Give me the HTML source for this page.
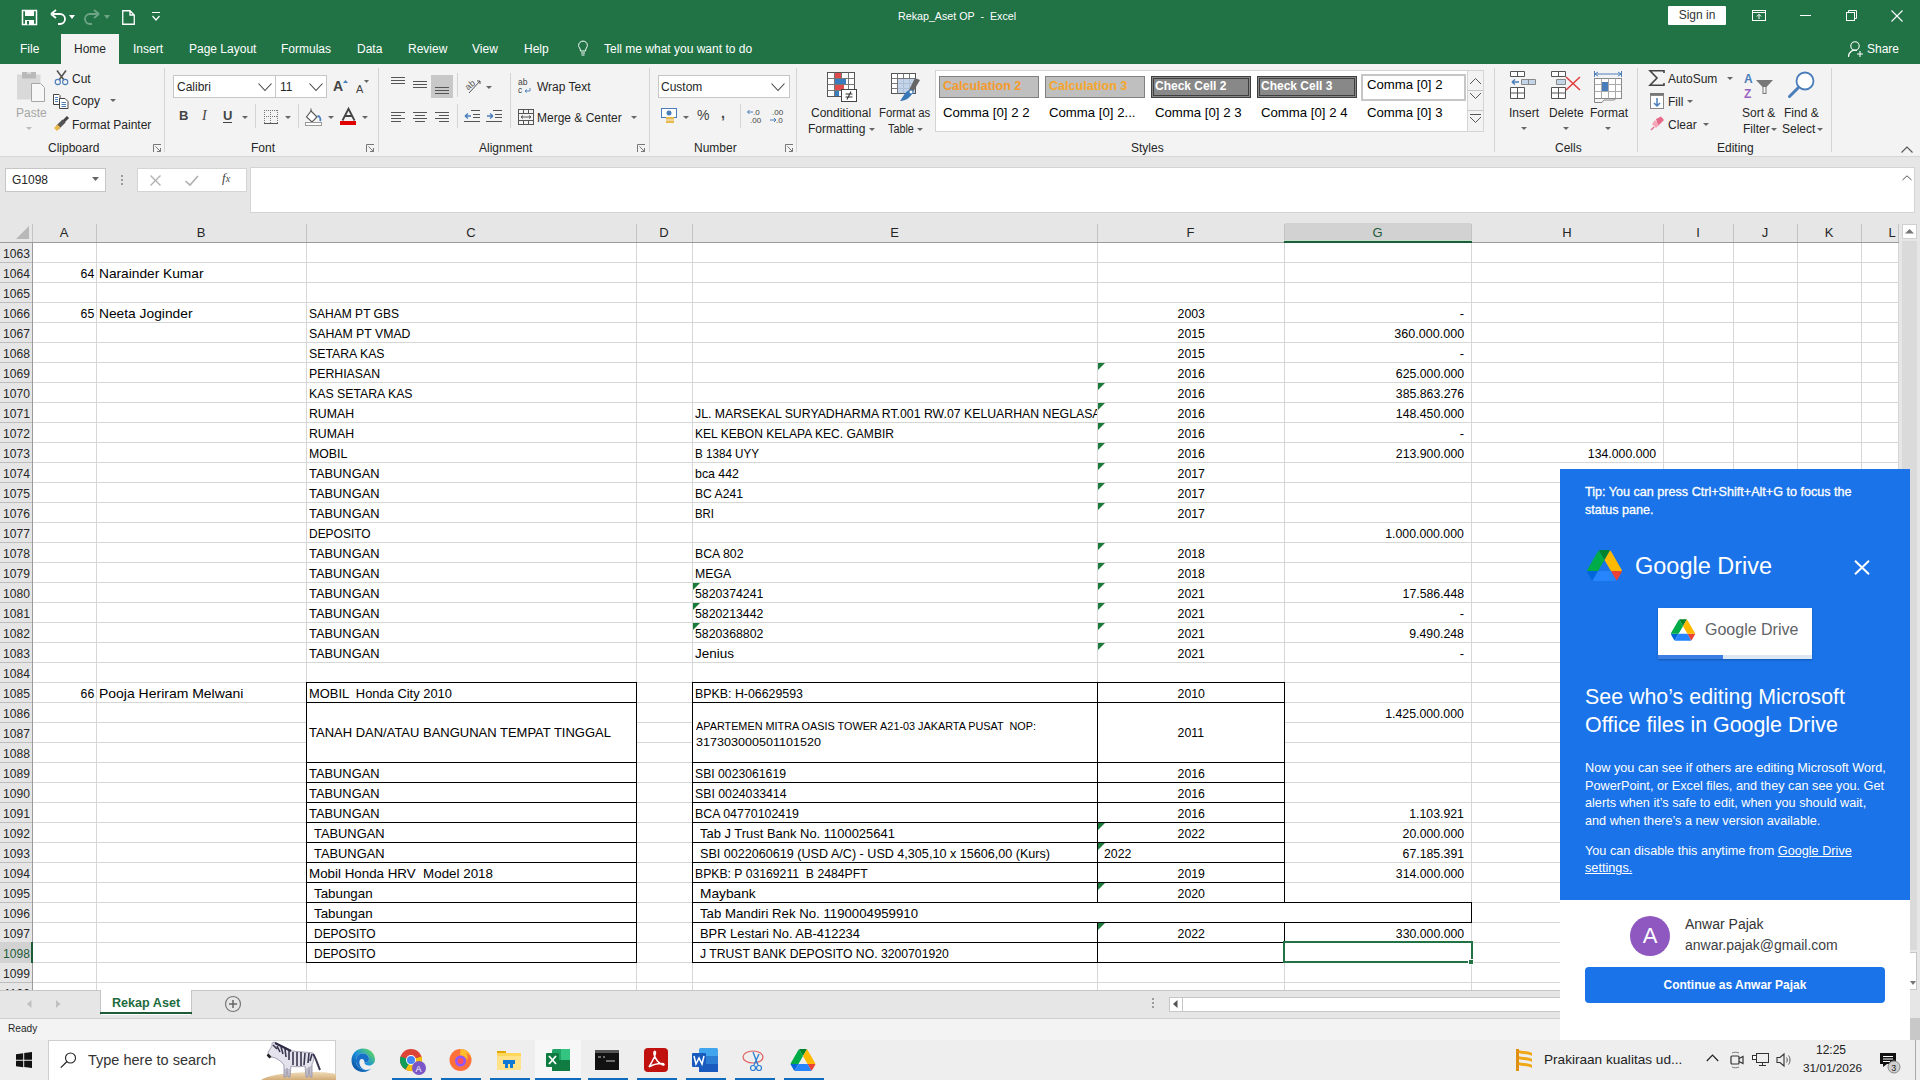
<!DOCTYPE html>
<html><head><meta charset="utf-8"><title>Rekap_Aset OP - Excel</title>
<style>
html,body{margin:0;padding:0;}
body{width:1920px;height:1080px;overflow:hidden;position:relative;font-family:"Liberation Sans", sans-serif;background:#fff;}
div{box-sizing:border-box;}
svg{position:absolute;overflow:visible;}
</style></head><body>

<div style="position:absolute;left:0px;top:0px;width:1920px;height:64px;background:#217346;"></div>
<div style="position:absolute;left:61px;top:34px;width:58px;height:30px;background:#f3f3f3;"></div>
<!-- quick access -->
<svg style="left:22px;top:10px" width="15" height="15"><path d="M0.5 0.5 H14.5 V14.5 H0.5 Z" fill="none" stroke="#fff" stroke-width="1.5"/><rect x="3" y="1" width="9" height="5" fill="#fff"/><rect x="3" y="10" width="9" height="4.5" fill="#fff"/><rect x="5" y="11" width="2" height="3.5" fill="#217346"/></svg>
<svg style="left:50px;top:9px" width="30" height="16"><path d="M3 5 H10 A5 5 0 0 1 10 15 H8" fill="none" stroke="#fff" stroke-width="1.8"/><path d="M1 5 L6 1 M1 5 L6 9" stroke="#fff" stroke-width="1.8" fill="none"/><polygon points="19,6 25,6 22,10" fill="#fff"/></svg>
<svg style="left:85px;top:9px" width="30" height="16" opacity="0.35"><path d="M12 5 H5 A5 5 0 0 0 5 15 H7" fill="none" stroke="#fff" stroke-width="1.8"/><path d="M14 5 L9 1 M14 5 L9 9" stroke="#fff" stroke-width="1.8" fill="none"/><polygon points="19,6 25,6 22,10" fill="#fff"/></svg>
<svg style="left:122px;top:10px" width="13" height="15"><path d="M0.75 0.75 H8 L12.25 5 V14.25 H0.75 Z M8 0.75 V5 H12.25" fill="none" stroke="#fff" stroke-width="1.3"/></svg>
<svg style="left:152px;top:12px" width="9" height="10"><path d="M0 0.5 H8" stroke="#fff" stroke-width="1"/><path d="M0.5 4 L4 8 L7.5 4" stroke="#fff" stroke-width="1.2" fill="none"/></svg>
<div style="position:absolute;left:898px;top:9px;font-size:11.5px;line-height:14px;color:#fff;white-space:pre;"><span style="display:inline-block;transform:scaleX(0.93);transform-origin:left">Rekap_Aset OP  -  Excel</span></div>
<!-- sign in etc -->
<div style="position:absolute;left:1668px;top:6px;width:58px;height:19px;background:#fff;border-radius:1px;font-size:12px;line-height:19px;text-align:center;color:#333;">Sign in</div>
<svg style="left:1752px;top:10px" width="14" height="11"><rect x="0.5" y="0.5" width="13" height="10" fill="none" stroke="#fff"/><path d="M0.5 2.5 H13.5" stroke="#fff"/><path d="M7 9 V4.5 M4.8 6.5 L7 4.3 L9.2 6.5" stroke="#fff" fill="none"/></svg>
<div style="position:absolute;left:1800px;top:15px;width:11px;height:1px;background:#fff;"></div>
<svg style="left:1846px;top:10px" width="11" height="11"><rect x="0.5" y="2.5" width="8" height="8" fill="none" stroke="#fff"/><path d="M2.5 2.5 V0.5 H10.5 V8.5 H8.5" fill="none" stroke="#fff"/></svg>
<svg style="left:1891px;top:10px" width="12" height="12"><path d="M0.5 0.5 L11.5 11.5 M11.5 0.5 L0.5 11.5" stroke="#fff" stroke-width="1.1"/></svg>
<svg style="left:1848px;top:41px" width="16" height="17"><circle cx="7" cy="5" r="4.2" fill="none" stroke="#fff" stroke-width="1.1"/><path d="M0.5 16 A6.5 6.5 0 0 1 9 9.5" fill="none" stroke="#fff" stroke-width="1.1"/><path d="M12 10 V16 M9 13 H15" stroke="#fff" stroke-width="1.1"/></svg>
<div style="position:absolute;left:1867px;top:42px;font-size:12px;color:#fff;white-space:pre;">Share</div>
<!-- tabs -->
<div style="position:absolute;left:20px;top:42px;font-size:12px;color:#fff;white-space:pre;">File</div>
<div style="position:absolute;left:74px;top:42px;font-size:12px;color:#262626;white-space:pre;">Home</div>
<div style="position:absolute;left:133px;top:42px;font-size:12px;color:#fff;white-space:pre;">Insert</div>
<div style="position:absolute;left:189px;top:42px;font-size:12px;color:#fff;white-space:pre;">Page Layout</div>
<div style="position:absolute;left:281px;top:42px;font-size:12px;color:#fff;white-space:pre;">Formulas</div>
<div style="position:absolute;left:357px;top:42px;font-size:12px;color:#fff;white-space:pre;">Data</div>
<div style="position:absolute;left:408px;top:42px;font-size:12px;color:#fff;white-space:pre;">Review</div>
<div style="position:absolute;left:472px;top:42px;font-size:12px;color:#fff;white-space:pre;">View</div>
<div style="position:absolute;left:524px;top:42px;font-size:12px;color:#fff;white-space:pre;">Help</div>
<svg style="left:578px;top:41px" width="10" height="15"><path d="M2.5 10 C2.5 7 0.6 6.5 0.6 4.5 A4.4 4.4 0 0 1 9.4 4.5 C9.4 6.5 7.5 7 7.5 10 Z" fill="none" stroke="#fff" stroke-width="1"/><path d="M3 12 H7 M3.5 14 H6.5" stroke="#fff" stroke-width="1"/></svg>
<div style="position:absolute;left:604px;top:42px;font-size:12px;color:#fff;white-space:pre;">Tell me what you want to do</div>

<div style="position:absolute;left:0px;top:64px;width:1920px;height:93px;background:#f3f3f3;"></div>
<div style="position:absolute;left:0px;top:156px;width:1920px;height:1px;background:#d6d6d6;"></div>
<style>
.t{position:absolute;white-space:pre;line-height:14px;font-size:12px;color:#262626;}
.sep{position:absolute;top:68px;width:1px;height:84px;background:#d4d4d4;}
.dd{position:absolute;width:0;height:0;border-left:3px solid transparent;border-right:3px solid transparent;border-top:3px solid #666;}
</style>
<!-- separators -->
<div class="sep" style="left:164px"></div>
<div class="sep" style="left:378px"></div>
<div class="sep" style="left:649px"></div>
<div class="sep" style="left:796px"></div>
<div class="sep" style="left:1494px"></div>
<div class="sep" style="left:1637px"></div>
<div class="sep" style="left:1831px"></div>
<!-- group labels -->
<div class="t" style="left:48px;top:141px">Clipboard</div>
<div class="t" style="left:251px;top:141px">Font</div>
<div class="t" style="left:479px;top:141px">Alignment</div>
<div class="t" style="left:694px;top:141px">Number</div>
<div class="t" style="left:1131px;top:141px">Styles</div>
<div class="t" style="left:1555px;top:141px">Cells</div>
<div class="t" style="left:1717px;top:141px">Editing</div>
<!-- launchers -->
<svg style="left:153px;top:144px" width="9" height="9"><path d="M0.5 8 V0.5 H8" fill="none" stroke="#777"/><path d="M2.5 2.5 L7.5 7.5 M4 7.5 H7.5 V4" fill="none" stroke="#777"/></svg>
<svg style="left:366px;top:144px" width="9" height="9"><path d="M0.5 8 V0.5 H8" fill="none" stroke="#777"/><path d="M2.5 2.5 L7.5 7.5 M4 7.5 H7.5 V4" fill="none" stroke="#777"/></svg>
<svg style="left:637px;top:144px" width="9" height="9"><path d="M0.5 8 V0.5 H8" fill="none" stroke="#777"/><path d="M2.5 2.5 L7.5 7.5 M4 7.5 H7.5 V4" fill="none" stroke="#777"/></svg>
<svg style="left:785px;top:144px" width="9" height="9"><path d="M0.5 8 V0.5 H8" fill="none" stroke="#777"/><path d="M2.5 2.5 L7.5 7.5 M4 7.5 H7.5 V4" fill="none" stroke="#777"/></svg>

<!-- ===== Clipboard ===== -->
<svg style="left:17px;top:72px" width="29" height="31">
 <rect x="0" y="2.5" width="23.5" height="25" fill="#d9d9d9"/>
 <rect x="5" y="0" width="14" height="6.5" fill="#b9b9b9"/>
 <rect x="10" y="0" width="4" height="2" fill="#d9d9d9"/>
 <path d="M14.5 11.5 H23.5 L27.5 15.5 V29.5 H14.5 Z" fill="#f7f7f7" stroke="#a6a6a6" stroke-width="1"/>
</svg>
<div class="t" style="left:16px;top:106px;color:#a6a6a6">Paste</div>
<div class="dd" style="left:26px;top:127px;border-top-color:#bbb"></div>
<svg style="left:54px;top:70px" width="16" height="16">
 <path d="M3 0.5 L10 10 M12 0.5 L5 10" stroke="#555" stroke-width="1.6"/>
 <circle cx="3.8" cy="12" r="2.6" fill="none" stroke="#4a7ebb" stroke-width="1.1"/>
 <circle cx="11.2" cy="12" r="2.6" fill="none" stroke="#4a7ebb" stroke-width="1.1"/>
</svg>
<div class="t" style="left:72px;top:72px">Cut</div>
<svg style="left:53px;top:94px" width="16" height="15">
 <path d="M0.5 0.5 H6 L7 1.5 V10.5 H0.5 Z" fill="#fff" stroke="#444"/>
 <path d="M2 3.5 H5 M2 5.5 H5 M2 7.5 H5" stroke="#4a7ebb"/>
 <path d="M6.5 4.5 H12 L15 7.5 V14.5 H6.5 Z" fill="#fff" stroke="#444"/>
 <path d="M8.5 8.5 H13 M8.5 10.5 H13 M8.5 12.5 H13" stroke="#4a7ebb"/>
</svg>
<div class="t" style="left:72px;top:94px">Copy</div>
<div class="dd" style="left:110px;top:99px"></div>
<svg style="left:54px;top:116px" width="16" height="17">
 <path d="M9 6 L14 1" stroke="#444" stroke-width="3"/>
 <path d="M3.5 11.5 L10 5" stroke="#555" stroke-width="4.5"/>
 <path d="M1.5 13.5 L5 10" stroke="#e8b84a" stroke-width="4.5"/>
</svg>
<div class="t" style="left:72px;top:118px">Format Painter</div>

<!-- ===== Font ===== -->
<div style="position:absolute;left:173px;top:75px;width:103px;height:23px;background:#fff;border:1px solid #c6c6c6;"></div>
<div style="position:absolute;left:275px;top:75px;width:52px;height:23px;background:#fff;border:1px solid #c6c6c6;"></div>
<div class="t" style="left:177px;top:80px">Calibri</div>
<div class="t" style="left:280px;top:80px">11</div>
<svg style="left:258px;top:83px" width="14" height="9"><path d="M0.5 0.5 L7 7.5 L13.5 0.5" fill="none" stroke="#444" stroke-width="1.1"/></svg>
<svg style="left:309px;top:83px" width="14" height="9"><path d="M0.5 0.5 L7 7.5 L13.5 0.5" fill="none" stroke="#444" stroke-width="1.1"/></svg>
<div class="t" style="left:333px;top:79px;font-size:14px;color:#444;font-weight:bold">A</div>
<svg style="left:343px;top:80px" width="5" height="4"><polygon points="0,3 2.5,0 5,3" fill="#4a7ebb"/></svg>
<div class="t" style="left:356px;top:82px;font-size:11px;color:#444">A</div>
<svg style="left:364px;top:80px" width="5" height="4"><polygon points="0,0 2.5,3 5,0" fill="#666"/></svg>
<div class="t" style="left:179px;top:109px;font-weight:bold;font-size:13px;color:#444">B</div>
<div class="t" style="left:202px;top:109px;font-style:italic;font-family:'Liberation Serif',serif;font-size:14px;color:#444">I</div>
<div class="t" style="left:223px;top:109px;font-size:13px;color:#444;font-weight:bold">U</div>
<div style="position:absolute;left:223px;top:122px;width:9px;height:1px;background:#444"></div>
<div class="dd" style="left:242px;top:116px"></div>
<div style="position:absolute;left:255px;top:104px;width:1px;height:24px;background:#d4d4d4"></div>
<svg style="left:264px;top:110px" width="14" height="14"><path d="M0 0.5 H14 M0 6.5 H14 M0.5 0 V13 M6.5 0 V13 M13.5 0 V13" stroke="#777" stroke-dasharray="1,1" fill="none"/><path d="M0 13.5 H14" stroke="#555"/></svg>
<div class="dd" style="left:285px;top:116px"></div>
<div style="position:absolute;left:298px;top:104px;width:1px;height:24px;background:#d4d4d4"></div>
<svg style="left:305px;top:108px" width="18" height="18">
 <path d="M6 3 L12 9 L7 14 L1.5 9 Z" fill="#fff" stroke="#555" stroke-width="1.1"/>
 <path d="M6 3 V0.5" stroke="#555"/>
 <path d="M12.5 8 C15 8 16 11 15 13" stroke="#4a7ebb" stroke-width="1.8" fill="none"/>
 <rect x="0.5" y="14.5" width="16" height="3" fill="#fff" stroke="#999"/>
</svg>
<div class="dd" style="left:328px;top:116px"></div>
<svg style="left:341px;top:108px" width="15" height="13"><path d="M1.5 12.5 L7.5 0.8 L13.5 12.5 M4 8 H11" fill="none" stroke="#444" stroke-width="1.8"/></svg>
<div style="position:absolute;left:340px;top:121px;width:16px;height:4px;background:#e00000"></div>
<div class="dd" style="left:362px;top:116px"></div>

<!-- ===== Alignment ===== -->
<div style="position:absolute;left:431px;top:75px;width:22px;height:23px;background:#c8c8c8"></div>
<svg style="left:391px;top:76px" width="60" height="20">
 <path d="M0 1.5 H14 M0 4.5 H14 M0 7.5 H14" stroke="#555"/>
 <path d="M22 5.5 H36 M22 8.5 H36 M22 11.5 H36" stroke="#555"/>
 <path d="M44 11.5 H58 M44 14.5 H58 M44 17.5 H58" stroke="#555"/>
</svg>
<svg style="left:391px;top:111px" width="60" height="13">
 <path d="M0 1.5 H14 M0 4.5 H10 M0 7.5 H14 M0 10.5 H10" stroke="#555"/>
 <path d="M22 1.5 H36 M24 4.5 H34 M22 7.5 H36 M24 10.5 H34" stroke="#555"/>
 <path d="M44 1.5 H58 M48 4.5 H58 M44 7.5 H58 M48 10.5 H58" stroke="#555"/>
</svg>
<div style="position:absolute;left:457px;top:73px;width:1px;height:24px;background:#d4d4d4"></div>
<div style="position:absolute;left:457px;top:104px;width:1px;height:24px;background:#d4d4d4"></div>
<svg style="left:464px;top:78px" width="18" height="16">
 <text x="1" y="10" font-size="9" fill="#555" transform="rotate(-40 6 7)" font-family="Liberation Sans">ab</text>
 <path d="M5 15 L16 3 M13 3 H16 V6" stroke="#555" fill="none" stroke-width="1"/>
</svg>
<div class="dd" style="left:486px;top:86px"></div>
<svg style="left:464px;top:109px" width="40" height="15">
 <path d="M7 1.5 H16 M9 5.5 H16 M9 8.5 H16 M0 12.5 H16" stroke="#555"/>
 <path d="M1 7 L4 4.5 M1 7 L4 9.5 M1 7 H7" stroke="#4a7ebb" stroke-width="1.3" fill="none"/>
 <path d="M29 1.5 H38 M31 5.5 H38 M31 8.5 H38 M22 12.5 H38" stroke="#555"/>
 <path d="M29 7 L26 4.5 M29 7 L26 9.5 M23 7 H29" stroke="#4a7ebb" stroke-width="1.3" fill="none"/>
</svg>
<div style="position:absolute;left:510px;top:73px;width:1px;height:55px;background:#d4d4d4"></div>
<svg style="left:518px;top:78px" width="15" height="16">
 <text x="0" y="7" font-size="8.5" fill="#444" font-family="Liberation Sans">ab</text>
 <text x="0" y="15" font-size="8.5" fill="#444" font-family="Liberation Sans">c</text>
 <path d="M12 10 V13 H7 M9 11.5 L7 13 L9 14.5" stroke="#4a7ebb" fill="none" stroke-width="0.9"/>
</svg>
<div class="t" style="left:537px;top:80px">Wrap Text</div>
<svg style="left:518px;top:109px" width="16" height="16">
 <rect x="0.5" y="0.5" width="15" height="15" fill="none" stroke="#555"/>
 <path d="M0.5 4.5 H15.5 M0.5 11.5 H15.5 M5.5 0.5 V4.5 M10.5 0.5 V4.5 M5.5 11.5 V15.5 M10.5 11.5 V15.5" stroke="#555"/>
 <path d="M3 8 H13 M3 8 L5 6.5 M3 8 L5 9.5 M13 8 L11 6.5 M13 8 L11 9.5" stroke="#555" fill="none"/>
</svg>
<div class="t" style="left:537px;top:111px">Merge &amp; Center</div>
<div class="dd" style="left:631px;top:116px"></div>

<!-- ===== Number ===== -->
<div style="position:absolute;left:658px;top:75px;width:132px;height:23px;background:#fff;border:1px solid #c6c6c6;"></div>
<div class="t" style="left:661px;top:80px">Custom</div>
<svg style="left:771px;top:83px" width="14" height="9"><path d="M0.5 0.5 L7 7.5 L13.5 0.5" fill="none" stroke="#444" stroke-width="1.1"/></svg>
<svg style="left:661px;top:108px" width="18" height="16">
 <rect x="0.5" y="0.5" width="15" height="9" fill="#fff" stroke="#4a7ebb"/>
 <circle cx="8" cy="5" r="2.5" fill="#4a7ebb"/>
 <rect x="5" y="9" width="8" height="2.5" fill="#e8b84a"/>
 <rect x="5" y="12.5" width="8" height="2.5" fill="#e8b84a"/>
</svg>
<div class="dd" style="left:683px;top:116px"></div>
<div class="t" style="left:697px;top:108px;font-size:14px;color:#444">%</div>
<div class="t" style="left:721px;top:106px;font-size:14px;color:#444;font-weight:bold">,</div>
<div style="position:absolute;left:740px;top:104px;width:1px;height:24px;background:#d4d4d4"></div>
<svg style="left:747px;top:108px" width="40" height="16">
 <text x="6" y="7" font-size="8" fill="#444" font-family="Liberation Sans">.0</text>
 <text x="3" y="15" font-size="8" fill="#444" font-family="Liberation Sans">.00</text>
 <path d="M0.5 4 H6 M0.5 4 L2.5 2 M0.5 4 L2.5 6" stroke="#4a7ebb" fill="none"/>
 <text x="25" y="7" font-size="8" fill="#444" font-family="Liberation Sans">.00</text>
 <text x="29" y="15" font-size="8" fill="#444" font-family="Liberation Sans">.0</text>
 <path d="M23 12 H29 M29 12 L27 10 M29 12 L27 14" stroke="#4a7ebb" fill="none"/>
</svg>

<!-- ===== Conditional formatting / table ===== -->
<svg style="left:827px;top:72px" width="32" height="32">
 <rect x="0.5" y="0.5" width="27" height="24" fill="#fff" stroke="#555"/>
 <path d="M0.5 6.5 H27.5 M0.5 12.5 H27.5 M0.5 18.5 H27.5 M7.5 0.5 V24.5 M14.5 0.5 V24.5 M21.5 0.5 V24.5" stroke="#777"/>
 <rect x="8" y="1" width="6" height="5" fill="#e04a4a"/>
 <rect x="8" y="7" width="11" height="5" fill="#3a7dbf"/>
 <rect x="8" y="13" width="9" height="5" fill="#e04a4a"/>
 <rect x="8" y="19" width="4" height="5" fill="#3a7dbf"/>
 <rect x="14.5" y="17.5" width="15" height="12" fill="#fff" stroke="#444"/>
 <path d="M18.5 22 H25.5 M18.5 25 H25.5 M24 19.5 L20 27.5" stroke="#333" stroke-width="1.1"/>
</svg>
<div class="t" style="left:811px;top:106px">Conditional</div>
<div class="t" style="left:808px;top:122px">Formatting</div>
<div class="dd" style="left:869px;top:128px"></div>
<svg style="left:891px;top:73px" width="32" height="30">
 <rect x="0.5" y="0.5" width="24" height="20" fill="#fff" stroke="#555"/>
 <path d="M0.5 5.5 H24.5 M0.5 10.5 H24.5 M0.5 15.5 H24.5 M6.5 0.5 V20.5 M12.5 0.5 V20.5 M18.5 0.5 V20.5" stroke="#777"/>
 <rect x="7" y="6" width="17" height="14" fill="#b8cde6" opacity="0.85"/>
 <path d="M29 7 L24 5 L18 17 L22 19 Z" fill="#666"/>
 <path d="M18 17 C14 19 12 24 9 28 C15 28 20 24 22 19 Z" fill="#3a78b8"/>
 <circle cx="20" cy="19" r="2" fill="#fff" stroke="#3a78b8"/>
</svg>
<div class="t" style="left:879px;top:106px"><span style="display:inline-block;transform:scaleX(0.95);transform-origin:left">Format as</span></div>
<div class="t" style="left:888px;top:122px"><span style="display:inline-block;transform:scaleX(0.9);transform-origin:left">Table</span></div>
<div class="dd" style="left:917px;top:128px"></div>

<!-- ===== Styles gallery ===== -->
<div style="position:absolute;left:935px;top:70px;width:533px;height:62px;background:#fff;border:1px solid #d4d4d4;"></div>
<div style="position:absolute;left:939px;top:76px;width:100px;height:22px;background:#bfbfbf;border:1px solid #808080;"></div>
<div class="t" style="left:943px;top:79px;font-weight:bold;color:#f59a2b;font-size:12.6px">Calculation 2</div>
<div style="position:absolute;left:1045px;top:76px;width:100px;height:22px;background:#bfbfbf;border:1px solid #808080;"></div>
<div class="t" style="left:1049px;top:79px;font-weight:bold;color:#f5a62b;font-size:12.6px">Calculation 3</div>
<div style="position:absolute;left:1151px;top:76px;width:100px;height:22px;background:#888888;border:3px double #3f3f3f;"></div>
<div class="t" style="left:1155px;top:79px;font-weight:bold;color:#fff">Check Cell 2</div>
<div style="position:absolute;left:1257px;top:76px;width:100px;height:22px;background:#888888;border:3px double #3f3f3f;"></div>
<div class="t" style="left:1261px;top:79px;font-weight:bold;color:#fff">Check Cell 3</div>
<div style="position:absolute;left:1361px;top:74px;width:105px;height:27px;background:#fff;border:2px solid #c6c6c6;"></div>
<div class="t" style="left:1367px;top:78px;color:#000;font-size:13.2px">Comma [0] 2</div>
<div class="t" style="left:943px;top:106px;color:#000;font-size:13.2px">Comma [0] 2 2</div>
<div class="t" style="left:1049px;top:106px;color:#000;font-size:13.2px">Comma [0] 2...</div>
<div class="t" style="left:1155px;top:106px;color:#000;font-size:13.2px">Comma [0] 2 3</div>
<div class="t" style="left:1261px;top:106px;color:#000;font-size:13.2px">Comma [0] 2 4</div>
<div class="t" style="left:1367px;top:106px;color:#000;font-size:13.2px">Comma [0] 3</div>
<div style="position:absolute;left:1467px;top:70px;width:17px;height:62px;background:#f3f3f3;border:1px solid #d4d4d4;"></div>
<div style="position:absolute;left:1468px;top:90px;width:15px;height:1px;background:#c6c6c6;"></div>
<div style="position:absolute;left:1468px;top:110px;width:15px;height:1px;background:#c6c6c6;"></div>
<svg style="left:1469px;top:76px" width="13" height="50">
 <path d="M1 8 L6.5 2.5 L12 8" fill="none" stroke="#555"/>
 <path d="M1 17 L6.5 22.5 L12 17" fill="none" stroke="#555"/>
 <path d="M1 38.5 H12" stroke="#555"/>
 <path d="M1 41 L6.5 46.5 L12 41" fill="none" stroke="#555"/>
</svg>

<!-- ===== Cells ===== -->
<svg style="left:1510px;top:71px" width="28" height="29">
 <path d="M0.5 0.5 H14.5 V5.5 H0.5 Z M7.5 0.5 V5.5" fill="#fff" stroke="#555"/>
 <path d="M11.5 8.5 H25.5 V13.5 H11.5 Z M18.5 8.5 V13.5" fill="#c5d5e8" stroke="#888"/>
 <path d="M2 11 H9 M2 11 L5 8.5 M2 11 L5 13.5" stroke="#4a7ebb" stroke-width="1.5" fill="none"/>
 <path d="M0.5 16.5 H14.5 V27.5 H0.5 Z M0.5 22 H14.5 M7.5 16.5 V27.5" fill="#fff" stroke="#555"/>
</svg>
<div class="t" style="left:1509px;top:106px">Insert</div>
<div class="dd" style="left:1521px;top:127px"></div>
<svg style="left:1551px;top:71px" width="32" height="29">
 <path d="M0.5 0.5 H14.5 V5.5 H0.5 Z M7.5 0.5 V5.5" fill="#fff" stroke="#555"/>
 <path d="M5.5 8.5 H14.5 V13.5 H5.5 Z" fill="#c5d5e8" stroke="#888"/>
 <path d="M0.5 16.5 H14.5 V27.5 H0.5 Z M0.5 22 H14.5 M7.5 16.5 V27.5" fill="#fff" stroke="#555"/>
 <path d="M15 6 L29 19 M29 6 L15 19" stroke="#e04040" stroke-width="1.6"/>
</svg>
<div class="t" style="left:1549px;top:106px">Delete</div>
<div class="dd" style="left:1563px;top:127px"></div>
<svg style="left:1594px;top:70px" width="30" height="33">
 <path d="M1 4 H27 M1 4 L4 2 M1 4 L4 6 M27 4 L24 2 M27 4 L24 6 M0.5 1 V7 M27.5 1 V7" stroke="#4a7ebb" fill="none"/>
 <rect x="0.5" y="8.5" width="27" height="20" fill="#fff" stroke="#888"/>
 <path d="M0.5 14.5 H27.5 M0.5 21.5 H27.5 M7.5 8.5 V28.5 M14.5 8.5 V28.5 M21.5 8.5 V28.5" stroke="#aaa"/>
 <rect x="8" y="12" width="6" height="9" fill="#4a7ebb"/>
 <path d="M0.5 28.5 V32.5 H8 L10 30 H20 L22 28.5" fill="none" stroke="#888"/>
</svg>
<div class="t" style="left:1590px;top:106px">Format</div>
<div class="dd" style="left:1605px;top:127px"></div>

<!-- ===== Editing ===== -->
<svg style="left:1649px;top:70px" width="16" height="16"><path d="M15 3 V0.8 H1 L8 8 L1 15.2 H15 V13" fill="none" stroke="#444" stroke-width="1.6"/></svg>
<div class="t" style="left:1668px;top:72px">AutoSum</div>
<div class="dd" style="left:1727px;top:77px"></div>
<svg style="left:1650px;top:93px" width="15" height="17">
 <rect x="0" y="0" width="14" height="2" fill="#777"/>
 <rect x="0.5" y="2.5" width="13" height="13" fill="#fff" stroke="#888"/>
 <path d="M7 5 V13 M4 10 L7 13 L10 10" stroke="#4a7ebb" stroke-width="1.5" fill="none"/>
</svg>
<div class="t" style="left:1668px;top:95px">Fill</div>
<div class="dd" style="left:1687px;top:100px"></div>
<svg style="left:1650px;top:116px" width="15" height="15">
 <path d="M6 3 L11 0.5 L14 4 L8 10 Z" fill="#e86a8a"/>
 <path d="M5 4 L9 9 L6 12 L2 8 Z" fill="#f4a6b8"/>
 <path d="M1 14 L4 11" stroke="#e86a8a" stroke-width="1.5"/>
</svg>
<div class="t" style="left:1668px;top:118px">Clear</div>
<div class="dd" style="left:1703px;top:123px"></div>
<svg style="left:1743px;top:72px" width="32" height="28">
 <text x="1" y="11" font-size="12" font-weight="bold" fill="#4a7ebb" font-family="Liberation Sans">A</text>
 <text x="1" y="26" font-size="12" font-weight="bold" fill="#9a62c0" font-family="Liberation Sans">Z</text>
 <path d="M13 8 H30 L23.5 15 V22 H19.5 V15 Z" fill="#777"/>
 <path d="M20.5 15 V21 H22.5 V15" fill="#f3f3f3"/>
</svg>
<div class="t" style="left:1742px;top:106px">Sort &amp;</div>
<div class="t" style="left:1743px;top:122px">Filter</div>
<div class="dd" style="left:1771px;top:128px"></div>
<svg style="left:1787px;top:71px" width="30" height="30">
 <circle cx="18" cy="10" r="8.5" fill="#fff" stroke="#4a7ebb" stroke-width="1.8"/>
 <path d="M11.5 16.5 L2.5 25.5" stroke="#4a7ebb" stroke-width="3" stroke-linecap="round"/>
</svg>
<div class="t" style="left:1784px;top:106px">Find &amp;</div>
<div class="t" style="left:1782px;top:122px">Select</div>
<div class="dd" style="left:1817px;top:128px"></div>
<svg style="left:1901px;top:146px" width="12" height="7"><path d="M0.5 6.5 L6 1 L11.5 6.5" fill="none" stroke="#555" stroke-width="1.1"/></svg>

<div style="position:absolute;left:0px;top:157px;width:1920px;height:66px;background:#e6e6e6;"></div>
<div style="position:absolute;left:5px;top:168px;width:101px;height:24px;background:#fff;border:1px solid #c6c6c6;"></div>
<div style="position:absolute;left:12px;top:173px;font-size:12px;color:#262626;">G1098</div>
<svg style="left:92px;top:177px" width="8" height="5"><polygon points="0,0 7,0 3.5,4" fill="#666"/></svg>
<div style="position:absolute;left:121px;top:175px;width:2px;height:2px;background:#9b9b9b;"></div>
<div style="position:absolute;left:121px;top:179px;width:2px;height:2px;background:#9b9b9b;"></div>
<div style="position:absolute;left:121px;top:183px;width:2px;height:2px;background:#9b9b9b;"></div>
<div style="position:absolute;left:137px;top:168px;width:110px;height:24px;background:#fff;border:1px solid #d4d4d4;"></div>
<svg style="left:150px;top:175px" width="11" height="11"><path d="M0.5 0.5 L10.5 10.5 M10.5 0.5 L0.5 10.5" stroke="#b0b0b0" stroke-width="1.3"/></svg>
<svg style="left:185px;top:175px" width="14" height="11"><path d="M0.5 6 L5 10 L13 1" fill="none" stroke="#b0b0b0" stroke-width="1.6"/></svg>
<div style="position:absolute;left:222px;top:170px;font-size:13px;font-style:italic;font-family:'Liberation Serif',serif;color:#444;">f<span style="font-size:10px">x</span></div>
<div style="position:absolute;left:250px;top:167px;width:1665px;height:46px;background:#fff;border:1px solid #d4d4d4;"></div>
<svg style="left:1902px;top:175px" width="10" height="6"><path d="M0.5 5 L5 0.8 L9.5 5" fill="none" stroke="#555" stroke-width="1"/></svg>

<div style="position:absolute;left:33px;top:243px;width:1865px;height:747px;background:#fff;"></div>
<div style="position:absolute;left:0px;top:223px;width:1899px;height:20px;background:#e6e6e6;"></div>
<div style="position:absolute;left:1285px;top:223px;width:186px;height:19px;background:#d2d2d2;"></div>
<div style="position:absolute;left:0px;top:243px;width:32px;height:747px;background:#e6e6e6;"></div>
<svg style="left:0;top:223px" width="32" height="20"><polygon points="29,3 29,16 16,16" fill="#b8b8b8"/></svg>
<div style="position:absolute;left:0px;top:242px;width:1899px;height:1px;background:#9b9b9b;"></div>
<div style="position:absolute;left:32px;top:224px;width:1px;height:18px;background:#c3c3c3;"></div>
<div style="position:absolute;left:96px;top:224px;width:1px;height:18px;background:#c3c3c3;"></div>
<div style="position:absolute;left:306px;top:224px;width:1px;height:18px;background:#c3c3c3;"></div>
<div style="position:absolute;left:636px;top:224px;width:1px;height:18px;background:#c3c3c3;"></div>
<div style="position:absolute;left:692px;top:224px;width:1px;height:18px;background:#c3c3c3;"></div>
<div style="position:absolute;left:1097px;top:224px;width:1px;height:18px;background:#c3c3c3;"></div>
<div style="position:absolute;left:1284px;top:224px;width:1px;height:18px;background:#c3c3c3;"></div>
<div style="position:absolute;left:1471px;top:224px;width:1px;height:18px;background:#c3c3c3;"></div>
<div style="position:absolute;left:1663px;top:224px;width:1px;height:18px;background:#c3c3c3;"></div>
<div style="position:absolute;left:1733px;top:224px;width:1px;height:18px;background:#c3c3c3;"></div>
<div style="position:absolute;left:1797px;top:224px;width:1px;height:18px;background:#c3c3c3;"></div>
<div style="position:absolute;left:1861px;top:224px;width:1px;height:18px;background:#c3c3c3;"></div>
<div style="position:absolute;left:1898px;top:224px;width:1px;height:18px;background:#c3c3c3;"></div>
<div style="position:absolute;left:32px;top:224px;width:64px;height:18px;line-height:18px;text-align:center;font-size:13px;color:#262626">A</div>
<div style="position:absolute;left:96px;top:224px;width:210px;height:18px;line-height:18px;text-align:center;font-size:13px;color:#262626">B</div>
<div style="position:absolute;left:306px;top:224px;width:330px;height:18px;line-height:18px;text-align:center;font-size:13px;color:#262626">C</div>
<div style="position:absolute;left:636px;top:224px;width:56px;height:18px;line-height:18px;text-align:center;font-size:13px;color:#262626">D</div>
<div style="position:absolute;left:692px;top:224px;width:405px;height:18px;line-height:18px;text-align:center;font-size:13px;color:#262626">E</div>
<div style="position:absolute;left:1097px;top:224px;width:187px;height:18px;line-height:18px;text-align:center;font-size:13px;color:#262626">F</div>
<div style="position:absolute;left:1284px;top:224px;width:187px;height:18px;line-height:18px;text-align:center;font-size:13px;color:#1e5c38">G</div>
<div style="position:absolute;left:1471px;top:224px;width:192px;height:18px;line-height:18px;text-align:center;font-size:13px;color:#262626">H</div>
<div style="position:absolute;left:1663px;top:224px;width:70px;height:18px;line-height:18px;text-align:center;font-size:13px;color:#262626">I</div>
<div style="position:absolute;left:1733px;top:224px;width:64px;height:18px;line-height:18px;text-align:center;font-size:13px;color:#262626">J</div>
<div style="position:absolute;left:1797px;top:224px;width:64px;height:18px;line-height:18px;text-align:center;font-size:13px;color:#262626">K</div>
<div style="position:absolute;left:1861px;top:224px;width:62px;height:18px;line-height:18px;text-align:center;font-size:13px;color:#262626">L</div>
<div style="position:absolute;left:1284px;top:240px;width:188px;height:1px;background:#bfe3cb;"></div>
<div style="position:absolute;left:1284px;top:241px;width:188px;height:2px;background:#1e5c38;"></div>
<div style="position:absolute;left:33px;top:262px;width:1865px;height:1px;background:#d6d6d6;"></div>
<div style="position:absolute;left:0px;top:262px;width:32px;height:1px;background:#bdbdbd;"></div>
<div style="position:absolute;left:33px;top:282px;width:1865px;height:1px;background:#d6d6d6;"></div>
<div style="position:absolute;left:0px;top:282px;width:32px;height:1px;background:#bdbdbd;"></div>
<div style="position:absolute;left:33px;top:302px;width:1865px;height:1px;background:#d6d6d6;"></div>
<div style="position:absolute;left:0px;top:302px;width:32px;height:1px;background:#bdbdbd;"></div>
<div style="position:absolute;left:33px;top:322px;width:1865px;height:1px;background:#d6d6d6;"></div>
<div style="position:absolute;left:0px;top:322px;width:32px;height:1px;background:#bdbdbd;"></div>
<div style="position:absolute;left:33px;top:342px;width:1865px;height:1px;background:#d6d6d6;"></div>
<div style="position:absolute;left:0px;top:342px;width:32px;height:1px;background:#bdbdbd;"></div>
<div style="position:absolute;left:33px;top:362px;width:1865px;height:1px;background:#d6d6d6;"></div>
<div style="position:absolute;left:0px;top:362px;width:32px;height:1px;background:#bdbdbd;"></div>
<div style="position:absolute;left:33px;top:382px;width:1865px;height:1px;background:#d6d6d6;"></div>
<div style="position:absolute;left:0px;top:382px;width:32px;height:1px;background:#bdbdbd;"></div>
<div style="position:absolute;left:33px;top:402px;width:1865px;height:1px;background:#d6d6d6;"></div>
<div style="position:absolute;left:0px;top:402px;width:32px;height:1px;background:#bdbdbd;"></div>
<div style="position:absolute;left:33px;top:422px;width:1865px;height:1px;background:#d6d6d6;"></div>
<div style="position:absolute;left:0px;top:422px;width:32px;height:1px;background:#bdbdbd;"></div>
<div style="position:absolute;left:33px;top:442px;width:1865px;height:1px;background:#d6d6d6;"></div>
<div style="position:absolute;left:0px;top:442px;width:32px;height:1px;background:#bdbdbd;"></div>
<div style="position:absolute;left:33px;top:462px;width:1865px;height:1px;background:#d6d6d6;"></div>
<div style="position:absolute;left:0px;top:462px;width:32px;height:1px;background:#bdbdbd;"></div>
<div style="position:absolute;left:33px;top:482px;width:1865px;height:1px;background:#d6d6d6;"></div>
<div style="position:absolute;left:0px;top:482px;width:32px;height:1px;background:#bdbdbd;"></div>
<div style="position:absolute;left:33px;top:502px;width:1865px;height:1px;background:#d6d6d6;"></div>
<div style="position:absolute;left:0px;top:502px;width:32px;height:1px;background:#bdbdbd;"></div>
<div style="position:absolute;left:33px;top:522px;width:1865px;height:1px;background:#d6d6d6;"></div>
<div style="position:absolute;left:0px;top:522px;width:32px;height:1px;background:#bdbdbd;"></div>
<div style="position:absolute;left:33px;top:542px;width:1865px;height:1px;background:#d6d6d6;"></div>
<div style="position:absolute;left:0px;top:542px;width:32px;height:1px;background:#bdbdbd;"></div>
<div style="position:absolute;left:33px;top:562px;width:1865px;height:1px;background:#d6d6d6;"></div>
<div style="position:absolute;left:0px;top:562px;width:32px;height:1px;background:#bdbdbd;"></div>
<div style="position:absolute;left:33px;top:582px;width:1865px;height:1px;background:#d6d6d6;"></div>
<div style="position:absolute;left:0px;top:582px;width:32px;height:1px;background:#bdbdbd;"></div>
<div style="position:absolute;left:33px;top:602px;width:1865px;height:1px;background:#d6d6d6;"></div>
<div style="position:absolute;left:0px;top:602px;width:32px;height:1px;background:#bdbdbd;"></div>
<div style="position:absolute;left:33px;top:622px;width:1865px;height:1px;background:#d6d6d6;"></div>
<div style="position:absolute;left:0px;top:622px;width:32px;height:1px;background:#bdbdbd;"></div>
<div style="position:absolute;left:33px;top:642px;width:1865px;height:1px;background:#d6d6d6;"></div>
<div style="position:absolute;left:0px;top:642px;width:32px;height:1px;background:#bdbdbd;"></div>
<div style="position:absolute;left:33px;top:662px;width:1865px;height:1px;background:#d6d6d6;"></div>
<div style="position:absolute;left:0px;top:662px;width:32px;height:1px;background:#bdbdbd;"></div>
<div style="position:absolute;left:33px;top:682px;width:1865px;height:1px;background:#d6d6d6;"></div>
<div style="position:absolute;left:0px;top:682px;width:32px;height:1px;background:#bdbdbd;"></div>
<div style="position:absolute;left:33px;top:702px;width:1865px;height:1px;background:#d6d6d6;"></div>
<div style="position:absolute;left:0px;top:702px;width:32px;height:1px;background:#bdbdbd;"></div>
<div style="position:absolute;left:33px;top:722px;width:1865px;height:1px;background:#d6d6d6;"></div>
<div style="position:absolute;left:0px;top:722px;width:32px;height:1px;background:#bdbdbd;"></div>
<div style="position:absolute;left:33px;top:742px;width:1865px;height:1px;background:#d6d6d6;"></div>
<div style="position:absolute;left:0px;top:742px;width:32px;height:1px;background:#bdbdbd;"></div>
<div style="position:absolute;left:33px;top:762px;width:1865px;height:1px;background:#d6d6d6;"></div>
<div style="position:absolute;left:0px;top:762px;width:32px;height:1px;background:#bdbdbd;"></div>
<div style="position:absolute;left:33px;top:782px;width:1865px;height:1px;background:#d6d6d6;"></div>
<div style="position:absolute;left:0px;top:782px;width:32px;height:1px;background:#bdbdbd;"></div>
<div style="position:absolute;left:33px;top:802px;width:1865px;height:1px;background:#d6d6d6;"></div>
<div style="position:absolute;left:0px;top:802px;width:32px;height:1px;background:#bdbdbd;"></div>
<div style="position:absolute;left:33px;top:822px;width:1865px;height:1px;background:#d6d6d6;"></div>
<div style="position:absolute;left:0px;top:822px;width:32px;height:1px;background:#bdbdbd;"></div>
<div style="position:absolute;left:33px;top:842px;width:1865px;height:1px;background:#d6d6d6;"></div>
<div style="position:absolute;left:0px;top:842px;width:32px;height:1px;background:#bdbdbd;"></div>
<div style="position:absolute;left:33px;top:862px;width:1865px;height:1px;background:#d6d6d6;"></div>
<div style="position:absolute;left:0px;top:862px;width:32px;height:1px;background:#bdbdbd;"></div>
<div style="position:absolute;left:33px;top:882px;width:1865px;height:1px;background:#d6d6d6;"></div>
<div style="position:absolute;left:0px;top:882px;width:32px;height:1px;background:#bdbdbd;"></div>
<div style="position:absolute;left:33px;top:902px;width:1865px;height:1px;background:#d6d6d6;"></div>
<div style="position:absolute;left:0px;top:902px;width:32px;height:1px;background:#bdbdbd;"></div>
<div style="position:absolute;left:33px;top:922px;width:1865px;height:1px;background:#d6d6d6;"></div>
<div style="position:absolute;left:0px;top:922px;width:32px;height:1px;background:#bdbdbd;"></div>
<div style="position:absolute;left:33px;top:942px;width:1865px;height:1px;background:#d6d6d6;"></div>
<div style="position:absolute;left:0px;top:942px;width:32px;height:1px;background:#bdbdbd;"></div>
<div style="position:absolute;left:33px;top:962px;width:1865px;height:1px;background:#d6d6d6;"></div>
<div style="position:absolute;left:0px;top:962px;width:32px;height:1px;background:#bdbdbd;"></div>
<div style="position:absolute;left:33px;top:982px;width:1865px;height:1px;background:#d6d6d6;"></div>
<div style="position:absolute;left:0px;top:982px;width:32px;height:1px;background:#bdbdbd;"></div>
<div style="position:absolute;left:96px;top:243px;width:1px;height:747px;background:#d6d6d6;"></div>
<div style="position:absolute;left:306px;top:243px;width:1px;height:747px;background:#d6d6d6;"></div>
<div style="position:absolute;left:636px;top:243px;width:1px;height:747px;background:#d6d6d6;"></div>
<div style="position:absolute;left:692px;top:243px;width:1px;height:747px;background:#d6d6d6;"></div>
<div style="position:absolute;left:1097px;top:243px;width:1px;height:747px;background:#d6d6d6;"></div>
<div style="position:absolute;left:1284px;top:243px;width:1px;height:747px;background:#d6d6d6;"></div>
<div style="position:absolute;left:1471px;top:243px;width:1px;height:747px;background:#d6d6d6;"></div>
<div style="position:absolute;left:1663px;top:243px;width:1px;height:747px;background:#d6d6d6;"></div>
<div style="position:absolute;left:1733px;top:243px;width:1px;height:747px;background:#d6d6d6;"></div>
<div style="position:absolute;left:1797px;top:243px;width:1px;height:747px;background:#d6d6d6;"></div>
<div style="position:absolute;left:1861px;top:243px;width:1px;height:747px;background:#d6d6d6;"></div>
<div style="position:absolute;left:1898px;top:243px;width:1px;height:747px;background:#d6d6d6;"></div>
<div style="position:absolute;left:32px;top:243px;width:1px;height:747px;background:#9b9b9b;"></div>
<div style="position:absolute;left:0;top:243px;width:31px;height:19px;line-height:21px;text-align:right;font-size:13px;color:#262626;padding-right:1px;"><span style="display:inline-block;transform:scaleX(0.93);transform-origin:right">1063</span></div>
<div style="position:absolute;left:0;top:263px;width:31px;height:19px;line-height:21px;text-align:right;font-size:13px;color:#262626;padding-right:1px;"><span style="display:inline-block;transform:scaleX(0.93);transform-origin:right">1064</span></div>
<div style="position:absolute;left:0;top:283px;width:31px;height:19px;line-height:21px;text-align:right;font-size:13px;color:#262626;padding-right:1px;"><span style="display:inline-block;transform:scaleX(0.93);transform-origin:right">1065</span></div>
<div style="position:absolute;left:0;top:303px;width:31px;height:19px;line-height:21px;text-align:right;font-size:13px;color:#262626;padding-right:1px;"><span style="display:inline-block;transform:scaleX(0.93);transform-origin:right">1066</span></div>
<div style="position:absolute;left:0;top:323px;width:31px;height:19px;line-height:21px;text-align:right;font-size:13px;color:#262626;padding-right:1px;"><span style="display:inline-block;transform:scaleX(0.93);transform-origin:right">1067</span></div>
<div style="position:absolute;left:0;top:343px;width:31px;height:19px;line-height:21px;text-align:right;font-size:13px;color:#262626;padding-right:1px;"><span style="display:inline-block;transform:scaleX(0.93);transform-origin:right">1068</span></div>
<div style="position:absolute;left:0;top:363px;width:31px;height:19px;line-height:21px;text-align:right;font-size:13px;color:#262626;padding-right:1px;"><span style="display:inline-block;transform:scaleX(0.93);transform-origin:right">1069</span></div>
<div style="position:absolute;left:0;top:383px;width:31px;height:19px;line-height:21px;text-align:right;font-size:13px;color:#262626;padding-right:1px;"><span style="display:inline-block;transform:scaleX(0.93);transform-origin:right">1070</span></div>
<div style="position:absolute;left:0;top:403px;width:31px;height:19px;line-height:21px;text-align:right;font-size:13px;color:#262626;padding-right:1px;"><span style="display:inline-block;transform:scaleX(0.93);transform-origin:right">1071</span></div>
<div style="position:absolute;left:0;top:423px;width:31px;height:19px;line-height:21px;text-align:right;font-size:13px;color:#262626;padding-right:1px;"><span style="display:inline-block;transform:scaleX(0.93);transform-origin:right">1072</span></div>
<div style="position:absolute;left:0;top:443px;width:31px;height:19px;line-height:21px;text-align:right;font-size:13px;color:#262626;padding-right:1px;"><span style="display:inline-block;transform:scaleX(0.93);transform-origin:right">1073</span></div>
<div style="position:absolute;left:0;top:463px;width:31px;height:19px;line-height:21px;text-align:right;font-size:13px;color:#262626;padding-right:1px;"><span style="display:inline-block;transform:scaleX(0.93);transform-origin:right">1074</span></div>
<div style="position:absolute;left:0;top:483px;width:31px;height:19px;line-height:21px;text-align:right;font-size:13px;color:#262626;padding-right:1px;"><span style="display:inline-block;transform:scaleX(0.93);transform-origin:right">1075</span></div>
<div style="position:absolute;left:0;top:503px;width:31px;height:19px;line-height:21px;text-align:right;font-size:13px;color:#262626;padding-right:1px;"><span style="display:inline-block;transform:scaleX(0.93);transform-origin:right">1076</span></div>
<div style="position:absolute;left:0;top:523px;width:31px;height:19px;line-height:21px;text-align:right;font-size:13px;color:#262626;padding-right:1px;"><span style="display:inline-block;transform:scaleX(0.93);transform-origin:right">1077</span></div>
<div style="position:absolute;left:0;top:543px;width:31px;height:19px;line-height:21px;text-align:right;font-size:13px;color:#262626;padding-right:1px;"><span style="display:inline-block;transform:scaleX(0.93);transform-origin:right">1078</span></div>
<div style="position:absolute;left:0;top:563px;width:31px;height:19px;line-height:21px;text-align:right;font-size:13px;color:#262626;padding-right:1px;"><span style="display:inline-block;transform:scaleX(0.93);transform-origin:right">1079</span></div>
<div style="position:absolute;left:0;top:583px;width:31px;height:19px;line-height:21px;text-align:right;font-size:13px;color:#262626;padding-right:1px;"><span style="display:inline-block;transform:scaleX(0.93);transform-origin:right">1080</span></div>
<div style="position:absolute;left:0;top:603px;width:31px;height:19px;line-height:21px;text-align:right;font-size:13px;color:#262626;padding-right:1px;"><span style="display:inline-block;transform:scaleX(0.93);transform-origin:right">1081</span></div>
<div style="position:absolute;left:0;top:623px;width:31px;height:19px;line-height:21px;text-align:right;font-size:13px;color:#262626;padding-right:1px;"><span style="display:inline-block;transform:scaleX(0.93);transform-origin:right">1082</span></div>
<div style="position:absolute;left:0;top:643px;width:31px;height:19px;line-height:21px;text-align:right;font-size:13px;color:#262626;padding-right:1px;"><span style="display:inline-block;transform:scaleX(0.93);transform-origin:right">1083</span></div>
<div style="position:absolute;left:0;top:663px;width:31px;height:19px;line-height:21px;text-align:right;font-size:13px;color:#262626;padding-right:1px;"><span style="display:inline-block;transform:scaleX(0.93);transform-origin:right">1084</span></div>
<div style="position:absolute;left:0;top:683px;width:31px;height:19px;line-height:21px;text-align:right;font-size:13px;color:#262626;padding-right:1px;"><span style="display:inline-block;transform:scaleX(0.93);transform-origin:right">1085</span></div>
<div style="position:absolute;left:0;top:703px;width:31px;height:19px;line-height:21px;text-align:right;font-size:13px;color:#262626;padding-right:1px;"><span style="display:inline-block;transform:scaleX(0.93);transform-origin:right">1086</span></div>
<div style="position:absolute;left:0;top:723px;width:31px;height:19px;line-height:21px;text-align:right;font-size:13px;color:#262626;padding-right:1px;"><span style="display:inline-block;transform:scaleX(0.93);transform-origin:right">1087</span></div>
<div style="position:absolute;left:0;top:743px;width:31px;height:19px;line-height:21px;text-align:right;font-size:13px;color:#262626;padding-right:1px;"><span style="display:inline-block;transform:scaleX(0.93);transform-origin:right">1088</span></div>
<div style="position:absolute;left:0;top:763px;width:31px;height:19px;line-height:21px;text-align:right;font-size:13px;color:#262626;padding-right:1px;"><span style="display:inline-block;transform:scaleX(0.93);transform-origin:right">1089</span></div>
<div style="position:absolute;left:0;top:783px;width:31px;height:19px;line-height:21px;text-align:right;font-size:13px;color:#262626;padding-right:1px;"><span style="display:inline-block;transform:scaleX(0.93);transform-origin:right">1090</span></div>
<div style="position:absolute;left:0;top:803px;width:31px;height:19px;line-height:21px;text-align:right;font-size:13px;color:#262626;padding-right:1px;"><span style="display:inline-block;transform:scaleX(0.93);transform-origin:right">1091</span></div>
<div style="position:absolute;left:0;top:823px;width:31px;height:19px;line-height:21px;text-align:right;font-size:13px;color:#262626;padding-right:1px;"><span style="display:inline-block;transform:scaleX(0.93);transform-origin:right">1092</span></div>
<div style="position:absolute;left:0;top:843px;width:31px;height:19px;line-height:21px;text-align:right;font-size:13px;color:#262626;padding-right:1px;"><span style="display:inline-block;transform:scaleX(0.93);transform-origin:right">1093</span></div>
<div style="position:absolute;left:0;top:863px;width:31px;height:19px;line-height:21px;text-align:right;font-size:13px;color:#262626;padding-right:1px;"><span style="display:inline-block;transform:scaleX(0.93);transform-origin:right">1094</span></div>
<div style="position:absolute;left:0;top:883px;width:31px;height:19px;line-height:21px;text-align:right;font-size:13px;color:#262626;padding-right:1px;"><span style="display:inline-block;transform:scaleX(0.93);transform-origin:right">1095</span></div>
<div style="position:absolute;left:0;top:903px;width:31px;height:19px;line-height:21px;text-align:right;font-size:13px;color:#262626;padding-right:1px;"><span style="display:inline-block;transform:scaleX(0.93);transform-origin:right">1096</span></div>
<div style="position:absolute;left:0;top:923px;width:31px;height:19px;line-height:21px;text-align:right;font-size:13px;color:#262626;padding-right:1px;"><span style="display:inline-block;transform:scaleX(0.93);transform-origin:right">1097</span></div>
<div style="position:absolute;left:0px;top:942px;width:31px;height:21px;background:#d2d2d2;"></div>
<div style="position:absolute;left:31px;top:942px;width:2px;height:21px;background:#1e5c38;"></div>
<div style="position:absolute;left:0;top:943px;width:31px;height:19px;line-height:21px;text-align:right;font-size:13px;color:#1e5c38;padding-right:1px;"><span style="display:inline-block;transform:scaleX(0.93);transform-origin:right">1098</span></div>
<div style="position:absolute;left:0;top:963px;width:31px;height:19px;line-height:21px;text-align:right;font-size:13px;color:#262626;padding-right:1px;"><span style="display:inline-block;transform:scaleX(0.93);transform-origin:right">1099</span></div>
<div style="position:absolute;left:0;top:983px;width:31px;height:19px;line-height:21px;text-align:right;font-size:13px;color:#262626;padding-right:1px;"><span style="display:inline-block;transform:scaleX(0.93);transform-origin:right">1100</span></div>
<div style="position:absolute;left:307px;top:703px;width:329px;height:59px;background:#fff;"></div>
<div style="position:absolute;left:693px;top:703px;width:404px;height:59px;background:#fff;"></div>
<div style="position:absolute;left:1098px;top:703px;width:186px;height:59px;background:#fff;"></div>
<div style="position:absolute;left:693px;top:903px;width:778px;height:19px;background:#fff;"></div>
<div style="position:absolute;left:33px;top:263px;width:63px;height:19px;line-height:22px;font-size:12.8px;color:#000;white-space:pre;overflow:hidden;padding-right:2px;text-align:right;"><span style="display:inline-block;transform:scaleX(0.960);transform-origin:right">64</span></div>
<div style="position:absolute;left:97px;top:263px;width:209px;height:19px;line-height:22px;font-size:12.8px;color:#000;white-space:pre;overflow:hidden;padding-left:2px;text-align:left;"><span style="display:inline-block;transform:scaleX(1.072);transform-origin:left">Narainder Kumar</span></div>
<div style="position:absolute;left:33px;top:303px;width:63px;height:19px;line-height:22px;font-size:12.8px;color:#000;white-space:pre;overflow:hidden;padding-right:2px;text-align:right;"><span style="display:inline-block;transform:scaleX(0.960);transform-origin:right">65</span></div>
<div style="position:absolute;left:97px;top:303px;width:209px;height:19px;line-height:22px;font-size:12.8px;color:#000;white-space:pre;overflow:hidden;padding-left:2px;text-align:left;"><span style="display:inline-block;transform:scaleX(1.077);transform-origin:left">Neeta Joginder</span></div>
<div style="position:absolute;left:307px;top:303px;width:329px;height:19px;line-height:22px;font-size:12.8px;color:#000;white-space:pre;overflow:hidden;padding-left:2px;text-align:left;"><span style="display:inline-block;transform:scaleX(0.940);transform-origin:left">SAHAM PT GBS</span></div>
<div style="position:absolute;left:1098px;top:303px;width:186px;height:19px;line-height:22px;font-size:12.8px;color:#000;white-space:pre;overflow:hidden;text-align:center;"><span style="display:inline-block;transform:scaleX(0.960);transform-origin:center">2003</span></div>
<div style="position:absolute;left:1285px;top:303px;width:186px;height:19px;line-height:22px;font-size:12.8px;color:#000;white-space:pre;overflow:hidden;padding-right:7px;text-align:right;"><span style="display:inline-block;transform:scaleX(1.000);transform-origin:right">-</span></div>
<div style="position:absolute;left:307px;top:323px;width:329px;height:19px;line-height:22px;font-size:12.8px;color:#000;white-space:pre;overflow:hidden;padding-left:2px;text-align:left;"><span style="display:inline-block;transform:scaleX(0.960);transform-origin:left">SAHAM PT VMAD</span></div>
<div style="position:absolute;left:1098px;top:323px;width:186px;height:19px;line-height:22px;font-size:12.8px;color:#000;white-space:pre;overflow:hidden;text-align:center;"><span style="display:inline-block;transform:scaleX(0.960);transform-origin:center">2015</span></div>
<div style="position:absolute;left:1285px;top:323px;width:186px;height:19px;line-height:22px;font-size:12.8px;color:#000;white-space:pre;overflow:hidden;padding-right:7px;text-align:right;"><span style="display:inline-block;transform:scaleX(0.983);transform-origin:right">360.000.000</span></div>
<div style="position:absolute;left:307px;top:343px;width:329px;height:19px;line-height:22px;font-size:12.8px;color:#000;white-space:pre;overflow:hidden;padding-left:2px;text-align:left;"><span style="display:inline-block;transform:scaleX(0.960);transform-origin:left">SETARA KAS</span></div>
<div style="position:absolute;left:1098px;top:343px;width:186px;height:19px;line-height:22px;font-size:12.8px;color:#000;white-space:pre;overflow:hidden;text-align:center;"><span style="display:inline-block;transform:scaleX(0.960);transform-origin:center">2015</span></div>
<div style="position:absolute;left:1285px;top:343px;width:186px;height:19px;line-height:22px;font-size:12.8px;color:#000;white-space:pre;overflow:hidden;padding-right:7px;text-align:right;"><span style="display:inline-block;transform:scaleX(1.000);transform-origin:right">-</span></div>
<div style="position:absolute;left:307px;top:363px;width:329px;height:19px;line-height:22px;font-size:12.8px;color:#000;white-space:pre;overflow:hidden;padding-left:2px;text-align:left;"><span style="display:inline-block;transform:scaleX(0.960);transform-origin:left">PERHIASAN</span></div>
<div style="position:absolute;left:1098px;top:363px;width:186px;height:19px;line-height:22px;font-size:12.8px;color:#000;white-space:pre;overflow:hidden;text-align:center;"><span style="display:inline-block;transform:scaleX(0.960);transform-origin:center">2016</span></div>
<div style="position:absolute;left:1285px;top:363px;width:186px;height:19px;line-height:22px;font-size:12.8px;color:#000;white-space:pre;overflow:hidden;padding-right:7px;text-align:right;"><span style="display:inline-block;transform:scaleX(0.960);transform-origin:right">625.000.000</span></div>
<svg style="left:1098px;top:363px" width="8" height="8"><polygon points="0,0 7,0 0,7" fill="#1a7a3a"/></svg>
<div style="position:absolute;left:307px;top:383px;width:329px;height:19px;line-height:22px;font-size:12.8px;color:#000;white-space:pre;overflow:hidden;padding-left:2px;text-align:left;"><span style="display:inline-block;transform:scaleX(0.960);transform-origin:left">KAS SETARA KAS</span></div>
<div style="position:absolute;left:1098px;top:383px;width:186px;height:19px;line-height:22px;font-size:12.8px;color:#000;white-space:pre;overflow:hidden;text-align:center;"><span style="display:inline-block;transform:scaleX(0.960);transform-origin:center">2016</span></div>
<div style="position:absolute;left:1285px;top:383px;width:186px;height:19px;line-height:22px;font-size:12.8px;color:#000;white-space:pre;overflow:hidden;padding-right:7px;text-align:right;"><span style="display:inline-block;transform:scaleX(0.960);transform-origin:right">385.863.276</span></div>
<svg style="left:1098px;top:383px" width="8" height="8"><polygon points="0,0 7,0 0,7" fill="#1a7a3a"/></svg>
<div style="position:absolute;left:307px;top:403px;width:329px;height:19px;line-height:22px;font-size:12.8px;color:#000;white-space:pre;overflow:hidden;padding-left:2px;text-align:left;"><span style="display:inline-block;transform:scaleX(0.960);transform-origin:left">RUMAH</span></div>
<div style="position:absolute;left:693px;top:403px;width:404px;height:19px;line-height:22px;font-size:12.8px;color:#000;white-space:pre;overflow:hidden;padding-left:2px;text-align:left;"><span style="display:inline-block;transform:scaleX(0.960);transform-origin:left">JL. MARSEKAL SURYADHARMA RT.001 RW.07 KELUARHAN NEGLASARI</span></div>
<div style="position:absolute;left:1098px;top:403px;width:186px;height:19px;line-height:22px;font-size:12.8px;color:#000;white-space:pre;overflow:hidden;text-align:center;"><span style="display:inline-block;transform:scaleX(0.960);transform-origin:center">2016</span></div>
<div style="position:absolute;left:1285px;top:403px;width:186px;height:19px;line-height:22px;font-size:12.8px;color:#000;white-space:pre;overflow:hidden;padding-right:7px;text-align:right;"><span style="display:inline-block;transform:scaleX(0.960);transform-origin:right">148.450.000</span></div>
<svg style="left:1098px;top:403px" width="8" height="8"><polygon points="0,0 7,0 0,7" fill="#1a7a3a"/></svg>
<div style="position:absolute;left:307px;top:423px;width:329px;height:19px;line-height:22px;font-size:12.8px;color:#000;white-space:pre;overflow:hidden;padding-left:2px;text-align:left;"><span style="display:inline-block;transform:scaleX(0.960);transform-origin:left">RUMAH</span></div>
<div style="position:absolute;left:693px;top:423px;width:404px;height:19px;line-height:22px;font-size:12.8px;color:#000;white-space:pre;overflow:hidden;padding-left:2px;text-align:left;"><span style="display:inline-block;transform:scaleX(0.942);transform-origin:left">KEL KEBON KELAPA KEC. GAMBIR</span></div>
<div style="position:absolute;left:1098px;top:423px;width:186px;height:19px;line-height:22px;font-size:12.8px;color:#000;white-space:pre;overflow:hidden;text-align:center;"><span style="display:inline-block;transform:scaleX(0.960);transform-origin:center">2016</span></div>
<div style="position:absolute;left:1285px;top:423px;width:186px;height:19px;line-height:22px;font-size:12.8px;color:#000;white-space:pre;overflow:hidden;padding-right:7px;text-align:right;"><span style="display:inline-block;transform:scaleX(1.000);transform-origin:right">-</span></div>
<svg style="left:1098px;top:423px" width="8" height="8"><polygon points="0,0 7,0 0,7" fill="#1a7a3a"/></svg>
<div style="position:absolute;left:307px;top:443px;width:329px;height:19px;line-height:22px;font-size:12.8px;color:#000;white-space:pre;overflow:hidden;padding-left:2px;text-align:left;"><span style="display:inline-block;transform:scaleX(0.960);transform-origin:left">MOBIL</span></div>
<div style="position:absolute;left:693px;top:443px;width:404px;height:19px;line-height:22px;font-size:12.8px;color:#000;white-space:pre;overflow:hidden;padding-left:2px;text-align:left;"><span style="display:inline-block;transform:scaleX(0.909);transform-origin:left">B 1384 UYY</span></div>
<div style="position:absolute;left:1098px;top:443px;width:186px;height:19px;line-height:22px;font-size:12.8px;color:#000;white-space:pre;overflow:hidden;text-align:center;"><span style="display:inline-block;transform:scaleX(0.960);transform-origin:center">2016</span></div>
<div style="position:absolute;left:1285px;top:443px;width:186px;height:19px;line-height:22px;font-size:12.8px;color:#000;white-space:pre;overflow:hidden;padding-right:7px;text-align:right;"><span style="display:inline-block;transform:scaleX(0.960);transform-origin:right">213.900.000</span></div>
<svg style="left:1098px;top:443px" width="8" height="8"><polygon points="0,0 7,0 0,7" fill="#1a7a3a"/></svg>
<div style="position:absolute;left:307px;top:463px;width:329px;height:19px;line-height:22px;font-size:12.8px;color:#000;white-space:pre;overflow:hidden;padding-left:2px;text-align:left;"><span style="display:inline-block;transform:scaleX(1.005);transform-origin:left">TABUNGAN</span></div>
<div style="position:absolute;left:693px;top:463px;width:404px;height:19px;line-height:22px;font-size:12.8px;color:#000;white-space:pre;overflow:hidden;padding-left:2px;text-align:left;"><span style="display:inline-block;transform:scaleX(0.966);transform-origin:left">bca 442</span></div>
<div style="position:absolute;left:1098px;top:463px;width:186px;height:19px;line-height:22px;font-size:12.8px;color:#000;white-space:pre;overflow:hidden;text-align:center;"><span style="display:inline-block;transform:scaleX(0.960);transform-origin:center">2017</span></div>
<svg style="left:1098px;top:463px" width="8" height="8"><polygon points="0,0 7,0 0,7" fill="#1a7a3a"/></svg>
<div style="position:absolute;left:307px;top:483px;width:329px;height:19px;line-height:22px;font-size:12.8px;color:#000;white-space:pre;overflow:hidden;padding-left:2px;text-align:left;"><span style="display:inline-block;transform:scaleX(1.005);transform-origin:left">TABUNGAN</span></div>
<div style="position:absolute;left:693px;top:483px;width:404px;height:19px;line-height:22px;font-size:12.8px;color:#000;white-space:pre;overflow:hidden;padding-left:2px;text-align:left;"><span style="display:inline-block;transform:scaleX(0.950);transform-origin:left">BC A241</span></div>
<div style="position:absolute;left:1098px;top:483px;width:186px;height:19px;line-height:22px;font-size:12.8px;color:#000;white-space:pre;overflow:hidden;text-align:center;"><span style="display:inline-block;transform:scaleX(0.960);transform-origin:center">2017</span></div>
<svg style="left:1098px;top:483px" width="8" height="8"><polygon points="0,0 7,0 0,7" fill="#1a7a3a"/></svg>
<div style="position:absolute;left:307px;top:503px;width:329px;height:19px;line-height:22px;font-size:12.8px;color:#000;white-space:pre;overflow:hidden;padding-left:2px;text-align:left;"><span style="display:inline-block;transform:scaleX(1.005);transform-origin:left">TABUNGAN</span></div>
<div style="position:absolute;left:693px;top:503px;width:404px;height:19px;line-height:22px;font-size:12.8px;color:#000;white-space:pre;overflow:hidden;padding-left:2px;text-align:left;"><span style="display:inline-block;transform:scaleX(0.890);transform-origin:left">BRI</span></div>
<div style="position:absolute;left:1098px;top:503px;width:186px;height:19px;line-height:22px;font-size:12.8px;color:#000;white-space:pre;overflow:hidden;text-align:center;"><span style="display:inline-block;transform:scaleX(0.960);transform-origin:center">2017</span></div>
<svg style="left:1098px;top:503px" width="8" height="8"><polygon points="0,0 7,0 0,7" fill="#1a7a3a"/></svg>
<div style="position:absolute;left:307px;top:523px;width:329px;height:19px;line-height:22px;font-size:12.8px;color:#000;white-space:pre;overflow:hidden;padding-left:2px;text-align:left;"><span style="display:inline-block;transform:scaleX(0.935);transform-origin:left">DEPOSITO</span></div>
<div style="position:absolute;left:1285px;top:523px;width:186px;height:19px;line-height:22px;font-size:12.8px;color:#000;white-space:pre;overflow:hidden;padding-right:7px;text-align:right;"><span style="display:inline-block;transform:scaleX(0.960);transform-origin:right">1.000.000.000</span></div>
<div style="position:absolute;left:307px;top:543px;width:329px;height:19px;line-height:22px;font-size:12.8px;color:#000;white-space:pre;overflow:hidden;padding-left:2px;text-align:left;"><span style="display:inline-block;transform:scaleX(1.005);transform-origin:left">TABUNGAN</span></div>
<div style="position:absolute;left:693px;top:543px;width:404px;height:19px;line-height:22px;font-size:12.8px;color:#000;white-space:pre;overflow:hidden;padding-left:2px;text-align:left;"><span style="display:inline-block;transform:scaleX(0.960);transform-origin:left">BCA 802</span></div>
<div style="position:absolute;left:1098px;top:543px;width:186px;height:19px;line-height:22px;font-size:12.8px;color:#000;white-space:pre;overflow:hidden;text-align:center;"><span style="display:inline-block;transform:scaleX(0.960);transform-origin:center">2018</span></div>
<svg style="left:1098px;top:543px" width="8" height="8"><polygon points="0,0 7,0 0,7" fill="#1a7a3a"/></svg>
<div style="position:absolute;left:307px;top:563px;width:329px;height:19px;line-height:22px;font-size:12.8px;color:#000;white-space:pre;overflow:hidden;padding-left:2px;text-align:left;"><span style="display:inline-block;transform:scaleX(1.005);transform-origin:left">TABUNGAN</span></div>
<div style="position:absolute;left:693px;top:563px;width:404px;height:19px;line-height:22px;font-size:12.8px;color:#000;white-space:pre;overflow:hidden;padding-left:2px;text-align:left;"><span style="display:inline-block;transform:scaleX(0.960);transform-origin:left">MEGA</span></div>
<div style="position:absolute;left:1098px;top:563px;width:186px;height:19px;line-height:22px;font-size:12.8px;color:#000;white-space:pre;overflow:hidden;text-align:center;"><span style="display:inline-block;transform:scaleX(0.960);transform-origin:center">2018</span></div>
<svg style="left:1098px;top:563px" width="8" height="8"><polygon points="0,0 7,0 0,7" fill="#1a7a3a"/></svg>
<div style="position:absolute;left:307px;top:583px;width:329px;height:19px;line-height:22px;font-size:12.8px;color:#000;white-space:pre;overflow:hidden;padding-left:2px;text-align:left;"><span style="display:inline-block;transform:scaleX(1.005);transform-origin:left">TABUNGAN</span></div>
<div style="position:absolute;left:693px;top:583px;width:404px;height:19px;line-height:22px;font-size:12.8px;color:#000;white-space:pre;overflow:hidden;padding-left:2px;text-align:left;"><span style="display:inline-block;transform:scaleX(0.960);transform-origin:left">5820374241</span></div>
<div style="position:absolute;left:1098px;top:583px;width:186px;height:19px;line-height:22px;font-size:12.8px;color:#000;white-space:pre;overflow:hidden;text-align:center;"><span style="display:inline-block;transform:scaleX(0.960);transform-origin:center">2021</span></div>
<div style="position:absolute;left:1285px;top:583px;width:186px;height:19px;line-height:22px;font-size:12.8px;color:#000;white-space:pre;overflow:hidden;padding-right:7px;text-align:right;"><span style="display:inline-block;transform:scaleX(0.960);transform-origin:right">17.586.448</span></div>
<svg style="left:1098px;top:583px" width="8" height="8"><polygon points="0,0 7,0 0,7" fill="#1a7a3a"/></svg>
<div style="position:absolute;left:307px;top:603px;width:329px;height:19px;line-height:22px;font-size:12.8px;color:#000;white-space:pre;overflow:hidden;padding-left:2px;text-align:left;"><span style="display:inline-block;transform:scaleX(1.005);transform-origin:left">TABUNGAN</span></div>
<div style="position:absolute;left:693px;top:603px;width:404px;height:19px;line-height:22px;font-size:12.8px;color:#000;white-space:pre;overflow:hidden;padding-left:2px;text-align:left;"><span style="display:inline-block;transform:scaleX(0.960);transform-origin:left">5820213442</span></div>
<div style="position:absolute;left:1098px;top:603px;width:186px;height:19px;line-height:22px;font-size:12.8px;color:#000;white-space:pre;overflow:hidden;text-align:center;"><span style="display:inline-block;transform:scaleX(0.960);transform-origin:center">2021</span></div>
<div style="position:absolute;left:1285px;top:603px;width:186px;height:19px;line-height:22px;font-size:12.8px;color:#000;white-space:pre;overflow:hidden;padding-right:7px;text-align:right;"><span style="display:inline-block;transform:scaleX(1.000);transform-origin:right">-</span></div>
<svg style="left:1098px;top:603px" width="8" height="8"><polygon points="0,0 7,0 0,7" fill="#1a7a3a"/></svg>
<div style="position:absolute;left:307px;top:623px;width:329px;height:19px;line-height:22px;font-size:12.8px;color:#000;white-space:pre;overflow:hidden;padding-left:2px;text-align:left;"><span style="display:inline-block;transform:scaleX(1.005);transform-origin:left">TABUNGAN</span></div>
<div style="position:absolute;left:693px;top:623px;width:404px;height:19px;line-height:22px;font-size:12.8px;color:#000;white-space:pre;overflow:hidden;padding-left:2px;text-align:left;"><span style="display:inline-block;transform:scaleX(0.960);transform-origin:left">5820368802</span></div>
<div style="position:absolute;left:1098px;top:623px;width:186px;height:19px;line-height:22px;font-size:12.8px;color:#000;white-space:pre;overflow:hidden;text-align:center;"><span style="display:inline-block;transform:scaleX(0.960);transform-origin:center">2021</span></div>
<div style="position:absolute;left:1285px;top:623px;width:186px;height:19px;line-height:22px;font-size:12.8px;color:#000;white-space:pre;overflow:hidden;padding-right:7px;text-align:right;"><span style="display:inline-block;transform:scaleX(0.960);transform-origin:right">9.490.248</span></div>
<svg style="left:1098px;top:623px" width="8" height="8"><polygon points="0,0 7,0 0,7" fill="#1a7a3a"/></svg>
<div style="position:absolute;left:307px;top:643px;width:329px;height:19px;line-height:22px;font-size:12.8px;color:#000;white-space:pre;overflow:hidden;padding-left:2px;text-align:left;"><span style="display:inline-block;transform:scaleX(1.005);transform-origin:left">TABUNGAN</span></div>
<div style="position:absolute;left:693px;top:643px;width:404px;height:19px;line-height:22px;font-size:12.8px;color:#000;white-space:pre;overflow:hidden;padding-left:2px;text-align:left;"><span style="display:inline-block;transform:scaleX(1.052);transform-origin:left">Jenius</span></div>
<div style="position:absolute;left:1098px;top:643px;width:186px;height:19px;line-height:22px;font-size:12.8px;color:#000;white-space:pre;overflow:hidden;text-align:center;"><span style="display:inline-block;transform:scaleX(0.960);transform-origin:center">2021</span></div>
<div style="position:absolute;left:1285px;top:643px;width:186px;height:19px;line-height:22px;font-size:12.8px;color:#000;white-space:pre;overflow:hidden;padding-right:7px;text-align:right;"><span style="display:inline-block;transform:scaleX(1.000);transform-origin:right">-</span></div>
<svg style="left:1098px;top:643px" width="8" height="8"><polygon points="0,0 7,0 0,7" fill="#1a7a3a"/></svg>
<svg style="left:693px;top:583px" width="8" height="8"><polygon points="0,0 7,0 0,7" fill="#1a7a3a"/></svg>
<svg style="left:693px;top:603px" width="8" height="8"><polygon points="0,0 7,0 0,7" fill="#1a7a3a"/></svg>
<svg style="left:693px;top:623px" width="8" height="8"><polygon points="0,0 7,0 0,7" fill="#1a7a3a"/></svg>
<div style="position:absolute;left:1472px;top:443px;width:191px;height:19px;line-height:22px;font-size:12.8px;color:#000;white-space:pre;overflow:hidden;padding-right:7px;text-align:right;"><span style="display:inline-block;transform:scaleX(0.960);transform-origin:right">134.000.000</span></div>
<div style="position:absolute;left:33px;top:683px;width:63px;height:19px;line-height:22px;font-size:12.8px;color:#000;white-space:pre;overflow:hidden;padding-right:2px;text-align:right;"><span style="display:inline-block;transform:scaleX(0.960);transform-origin:right">66</span></div>
<div style="position:absolute;left:97px;top:683px;width:209px;height:19px;line-height:22px;font-size:12.8px;color:#000;white-space:pre;overflow:hidden;padding-left:2px;text-align:left;"><span style="display:inline-block;transform:scaleX(1.092);transform-origin:left">Pooja Heriram Melwani</span></div>
<div style="position:absolute;left:307px;top:683px;width:329px;height:19px;line-height:22px;font-size:12.8px;color:#000;white-space:pre;overflow:hidden;padding-left:2px;text-align:left;"><span style="display:inline-block;transform:scaleX(1.008);transform-origin:left">MOBIL  Honda City 2010</span></div>
<div style="position:absolute;left:693px;top:683px;width:404px;height:19px;line-height:22px;font-size:12.8px;color:#000;white-space:pre;overflow:hidden;padding-left:2px;text-align:left;"><span style="display:inline-block;transform:scaleX(0.967);transform-origin:left">BPKB: H-06629593</span></div>
<div style="position:absolute;left:1098px;top:683px;width:186px;height:19px;line-height:22px;font-size:12.8px;color:#000;white-space:pre;overflow:hidden;text-align:center;"><span style="display:inline-block;transform:scaleX(0.960);transform-origin:center">2010</span></div>
<div style="position:absolute;left:307px;top:703px;width:329px;height:59px;line-height:60px;font-size:12.8px;color:#000;white-space:pre;overflow:hidden;padding-left:2px;text-align:left;"><span style="display:inline-block;transform:scaleX(1.015);transform-origin:left">TANAH DAN/ATAU BANGUNAN TEMPAT TINGGAL</span></div>
<div style="position:absolute;left:696px;top:718px;font-size:10.8px;line-height:16px;color:#000;white-space:pre;"><span style="display:inline-block;transform:scaleX(1.004);transform-origin:left">APARTEMEN MITRA OASIS TOWER A21-03 JAKARTA PUSAT  NOP:</span></div>
<div style="position:absolute;left:696px;top:734px;font-size:10.8px;line-height:16px;color:#000;white-space:pre;"><span style="display:inline-block;transform:scaleX(1.165);transform-origin:left">317303000501101520</span></div>
<div style="position:absolute;left:1098px;top:703px;width:186px;height:59px;line-height:60px;font-size:12.8px;color:#000;white-space:pre;overflow:hidden;text-align:center;"><span style="display:inline-block;transform:scaleX(0.960);transform-origin:center">2011</span></div>
<div style="position:absolute;left:1285px;top:703px;width:186px;height:19px;line-height:22px;font-size:12.8px;color:#000;white-space:pre;overflow:hidden;padding-right:7px;text-align:right;"><span style="display:inline-block;transform:scaleX(0.960);transform-origin:right">1.425.000.000</span></div>
<div style="position:absolute;left:307px;top:763px;width:329px;height:19px;line-height:22px;font-size:12.8px;color:#000;white-space:pre;overflow:hidden;padding-left:2px;text-align:left;"><span style="display:inline-block;transform:scaleX(1.005);transform-origin:left">TABUNGAN</span></div>
<div style="position:absolute;left:693px;top:763px;width:404px;height:19px;line-height:22px;font-size:12.8px;color:#000;white-space:pre;overflow:hidden;padding-left:2px;text-align:left;"><span style="display:inline-block;transform:scaleX(0.954);transform-origin:left">SBI 0023061619</span></div>
<div style="position:absolute;left:1098px;top:763px;width:186px;height:19px;line-height:22px;font-size:12.8px;color:#000;white-space:pre;overflow:hidden;text-align:center;"><span style="display:inline-block;transform:scaleX(0.960);transform-origin:center">2016</span></div>
<div style="position:absolute;left:307px;top:783px;width:329px;height:19px;line-height:22px;font-size:12.8px;color:#000;white-space:pre;overflow:hidden;padding-left:2px;text-align:left;"><span style="display:inline-block;transform:scaleX(1.005);transform-origin:left">TABUNGAN</span></div>
<div style="position:absolute;left:693px;top:783px;width:404px;height:19px;line-height:22px;font-size:12.8px;color:#000;white-space:pre;overflow:hidden;padding-left:2px;text-align:left;"><span style="display:inline-block;transform:scaleX(0.960);transform-origin:left">SBI 0024033414</span></div>
<div style="position:absolute;left:1098px;top:783px;width:186px;height:19px;line-height:22px;font-size:12.8px;color:#000;white-space:pre;overflow:hidden;text-align:center;"><span style="display:inline-block;transform:scaleX(0.960);transform-origin:center">2016</span></div>
<div style="position:absolute;left:307px;top:803px;width:329px;height:19px;line-height:22px;font-size:12.8px;color:#000;white-space:pre;overflow:hidden;padding-left:2px;text-align:left;"><span style="display:inline-block;transform:scaleX(1.005);transform-origin:left">TABUNGAN</span></div>
<div style="position:absolute;left:693px;top:803px;width:404px;height:19px;line-height:22px;font-size:12.8px;color:#000;white-space:pre;overflow:hidden;padding-left:2px;text-align:left;"><span style="display:inline-block;transform:scaleX(0.968);transform-origin:left">BCA 04770102419</span></div>
<div style="position:absolute;left:1098px;top:803px;width:186px;height:19px;line-height:22px;font-size:12.8px;color:#000;white-space:pre;overflow:hidden;text-align:center;"><span style="display:inline-block;transform:scaleX(0.960);transform-origin:center">2016</span></div>
<div style="position:absolute;left:1285px;top:803px;width:186px;height:19px;line-height:22px;font-size:12.8px;color:#000;white-space:pre;overflow:hidden;padding-right:7px;text-align:right;"><span style="display:inline-block;transform:scaleX(0.960);transform-origin:right">1.103.921</span></div>
<div style="position:absolute;left:307px;top:823px;width:329px;height:19px;line-height:22px;font-size:12.8px;color:#000;white-space:pre;overflow:hidden;padding-left:7px;text-align:left;"><span style="display:inline-block;transform:scaleX(1.005);transform-origin:left">TABUNGAN</span></div>
<div style="position:absolute;left:693px;top:823px;width:404px;height:19px;line-height:22px;font-size:12.8px;color:#000;white-space:pre;overflow:hidden;padding-left:7px;text-align:left;"><span style="display:inline-block;transform:scaleX(1.012);transform-origin:left">Tab J Trust Bank No. 1100025641</span></div>
<div style="position:absolute;left:1098px;top:823px;width:186px;height:19px;line-height:22px;font-size:12.8px;color:#000;white-space:pre;overflow:hidden;text-align:center;"><span style="display:inline-block;transform:scaleX(0.960);transform-origin:center">2022</span></div>
<div style="position:absolute;left:1285px;top:823px;width:186px;height:19px;line-height:22px;font-size:12.8px;color:#000;white-space:pre;overflow:hidden;padding-right:7px;text-align:right;"><span style="display:inline-block;transform:scaleX(0.960);transform-origin:right">20.000.000</span></div>
<svg style="left:1098px;top:823px" width="8" height="8"><polygon points="0,0 7,0 0,7" fill="#1a7a3a"/></svg>
<div style="position:absolute;left:307px;top:843px;width:329px;height:19px;line-height:22px;font-size:12.8px;color:#000;white-space:pre;overflow:hidden;padding-left:7px;text-align:left;"><span style="display:inline-block;transform:scaleX(1.005);transform-origin:left">TABUNGAN</span></div>
<div style="position:absolute;left:693px;top:843px;width:404px;height:19px;line-height:22px;font-size:12.8px;color:#000;white-space:pre;overflow:hidden;padding-left:7px;text-align:left;"><span style="display:inline-block;transform:scaleX(0.984);transform-origin:left">SBI 0022060619 (USD A/C) - USD 4,305,10 x 15606,00 (Kurs)</span></div>
<div style="position:absolute;left:1098px;top:843px;width:186px;height:19px;line-height:22px;font-size:12.8px;color:#000;white-space:pre;overflow:hidden;padding-left:6px;text-align:left;"><span style="display:inline-block;transform:scaleX(0.960);transform-origin:left">2022</span></div>
<div style="position:absolute;left:1285px;top:843px;width:186px;height:19px;line-height:22px;font-size:12.8px;color:#000;white-space:pre;overflow:hidden;padding-right:7px;text-align:right;"><span style="display:inline-block;transform:scaleX(0.960);transform-origin:right">67.185.391</span></div>
<svg style="left:1098px;top:843px" width="8" height="8"><polygon points="0,0 7,0 0,7" fill="#1a7a3a"/></svg>
<div style="position:absolute;left:307px;top:863px;width:329px;height:19px;line-height:22px;font-size:12.8px;color:#000;white-space:pre;overflow:hidden;padding-left:2px;text-align:left;"><span style="display:inline-block;transform:scaleX(1.044);transform-origin:left">Mobil Honda HRV  Model 2018</span></div>
<div style="position:absolute;left:693px;top:863px;width:404px;height:19px;line-height:22px;font-size:12.8px;color:#000;white-space:pre;overflow:hidden;padding-left:2px;text-align:left;"><span style="display:inline-block;transform:scaleX(0.954);transform-origin:left">BPKB: P 03169211  B 2484PFT</span></div>
<div style="position:absolute;left:1098px;top:863px;width:186px;height:19px;line-height:22px;font-size:12.8px;color:#000;white-space:pre;overflow:hidden;text-align:center;"><span style="display:inline-block;transform:scaleX(0.960);transform-origin:center">2019</span></div>
<div style="position:absolute;left:1285px;top:863px;width:186px;height:19px;line-height:22px;font-size:12.8px;color:#000;white-space:pre;overflow:hidden;padding-right:7px;text-align:right;"><span style="display:inline-block;transform:scaleX(0.960);transform-origin:right">314.000.000</span></div>
<div style="position:absolute;left:307px;top:883px;width:329px;height:19px;line-height:22px;font-size:12.8px;color:#000;white-space:pre;overflow:hidden;padding-left:7px;text-align:left;"><span style="display:inline-block;transform:scaleX(1.042);transform-origin:left">Tabungan</span></div>
<div style="position:absolute;left:693px;top:883px;width:404px;height:19px;line-height:22px;font-size:12.8px;color:#000;white-space:pre;overflow:hidden;padding-left:7px;text-align:left;"><span style="display:inline-block;transform:scaleX(1.071);transform-origin:left">Maybank</span></div>
<div style="position:absolute;left:1098px;top:883px;width:186px;height:19px;line-height:22px;font-size:12.8px;color:#000;white-space:pre;overflow:hidden;text-align:center;"><span style="display:inline-block;transform:scaleX(0.960);transform-origin:center">2020</span></div>
<svg style="left:1098px;top:883px" width="8" height="8"><polygon points="0,0 7,0 0,7" fill="#1a7a3a"/></svg>
<div style="position:absolute;left:307px;top:903px;width:329px;height:19px;line-height:22px;font-size:12.8px;color:#000;white-space:pre;overflow:hidden;padding-left:7px;text-align:left;"><span style="display:inline-block;transform:scaleX(1.042);transform-origin:left">Tabungan</span></div>
<div style="position:absolute;left:307px;top:923px;width:329px;height:19px;line-height:22px;font-size:12.8px;color:#000;white-space:pre;overflow:hidden;padding-left:7px;text-align:left;"><span style="display:inline-block;transform:scaleX(0.935);transform-origin:left">DEPOSITO</span></div>
<div style="position:absolute;left:693px;top:923px;width:404px;height:19px;line-height:22px;font-size:12.8px;color:#000;white-space:pre;overflow:hidden;padding-left:7px;text-align:left;"><span style="display:inline-block;transform:scaleX(1.008);transform-origin:left">BPR Lestari No. AB-412234</span></div>
<div style="position:absolute;left:1098px;top:923px;width:186px;height:19px;line-height:22px;font-size:12.8px;color:#000;white-space:pre;overflow:hidden;text-align:center;"><span style="display:inline-block;transform:scaleX(0.960);transform-origin:center">2022</span></div>
<div style="position:absolute;left:1285px;top:923px;width:186px;height:19px;line-height:22px;font-size:12.8px;color:#000;white-space:pre;overflow:hidden;padding-right:7px;text-align:right;"><span style="display:inline-block;transform:scaleX(0.960);transform-origin:right">330.000.000</span></div>
<svg style="left:1098px;top:923px" width="8" height="8"><polygon points="0,0 7,0 0,7" fill="#1a7a3a"/></svg>
<div style="position:absolute;left:307px;top:943px;width:329px;height:19px;line-height:22px;font-size:12.8px;color:#000;white-space:pre;overflow:hidden;padding-left:7px;text-align:left;"><span style="display:inline-block;transform:scaleX(0.935);transform-origin:left">DEPOSITO</span></div>
<div style="position:absolute;left:693px;top:943px;width:404px;height:19px;line-height:22px;font-size:12.8px;color:#000;white-space:pre;overflow:hidden;padding-left:7px;text-align:left;"><span style="display:inline-block;transform:scaleX(0.953);transform-origin:left">J TRUST BANK DEPOSITO NO. 3200701920</span></div>
<div style="position:absolute;left:693px;top:903px;width:778px;height:19px;line-height:22px;font-size:12.8px;color:#000;white-space:pre;overflow:hidden;padding-left:7px;text-align:left;"><span style="display:inline-block;transform:scaleX(1.033);transform-origin:left">Tab Mandiri Rek No. 1190004959910</span></div>
<div style="position:absolute;left:306px;top:682px;width:331px;height:1px;background:#000;"></div>
<div style="position:absolute;left:306px;top:702px;width:331px;height:1px;background:#000;"></div>
<div style="position:absolute;left:306px;top:762px;width:331px;height:1px;background:#000;"></div>
<div style="position:absolute;left:306px;top:782px;width:331px;height:1px;background:#000;"></div>
<div style="position:absolute;left:306px;top:802px;width:331px;height:1px;background:#000;"></div>
<div style="position:absolute;left:306px;top:822px;width:331px;height:1px;background:#000;"></div>
<div style="position:absolute;left:306px;top:842px;width:331px;height:1px;background:#000;"></div>
<div style="position:absolute;left:306px;top:862px;width:331px;height:1px;background:#000;"></div>
<div style="position:absolute;left:306px;top:882px;width:331px;height:1px;background:#000;"></div>
<div style="position:absolute;left:306px;top:902px;width:331px;height:1px;background:#000;"></div>
<div style="position:absolute;left:306px;top:922px;width:331px;height:1px;background:#000;"></div>
<div style="position:absolute;left:306px;top:942px;width:331px;height:1px;background:#000;"></div>
<div style="position:absolute;left:306px;top:962px;width:331px;height:1px;background:#000;"></div>
<div style="position:absolute;left:306px;top:682px;width:1px;height:281px;background:#000;"></div>
<div style="position:absolute;left:636px;top:682px;width:1px;height:281px;background:#000;"></div>
<div style="position:absolute;left:692px;top:682px;width:593px;height:1px;background:#000;"></div>
<div style="position:absolute;left:692px;top:702px;width:593px;height:1px;background:#000;"></div>
<div style="position:absolute;left:692px;top:762px;width:593px;height:1px;background:#000;"></div>
<div style="position:absolute;left:692px;top:782px;width:593px;height:1px;background:#000;"></div>
<div style="position:absolute;left:692px;top:802px;width:593px;height:1px;background:#000;"></div>
<div style="position:absolute;left:692px;top:822px;width:593px;height:1px;background:#000;"></div>
<div style="position:absolute;left:692px;top:842px;width:593px;height:1px;background:#000;"></div>
<div style="position:absolute;left:692px;top:862px;width:593px;height:1px;background:#000;"></div>
<div style="position:absolute;left:692px;top:882px;width:593px;height:1px;background:#000;"></div>
<div style="position:absolute;left:692px;top:902px;width:593px;height:1px;background:#000;"></div>
<div style="position:absolute;left:692px;top:922px;width:593px;height:1px;background:#000;"></div>
<div style="position:absolute;left:692px;top:942px;width:593px;height:1px;background:#000;"></div>
<div style="position:absolute;left:692px;top:962px;width:593px;height:1px;background:#000;"></div>
<div style="position:absolute;left:692px;top:682px;width:1px;height:281px;background:#000;"></div>
<div style="position:absolute;left:1097px;top:682px;width:1px;height:221px;background:#000;"></div>
<div style="position:absolute;left:1097px;top:922px;width:1px;height:41px;background:#000;"></div>
<div style="position:absolute;left:1284px;top:682px;width:1px;height:221px;background:#000;"></div>
<div style="position:absolute;left:1284px;top:922px;width:1px;height:41px;background:#000;"></div>
<div style="position:absolute;left:1284px;top:902px;width:188px;height:1px;background:#000;"></div>
<div style="position:absolute;left:1284px;top:922px;width:188px;height:1px;background:#000;"></div>
<div style="position:absolute;left:1471px;top:902px;width:1px;height:21px;background:#000;"></div>
<div style="position:absolute;left:1283px;top:941px;width:190px;height:22px;border:2px solid #217346;"></div>
<div style="position:absolute;left:1468px;top:959px;width:6px;height:6px;background:#217346;border:1px solid #fff;"></div>
<!-- vertical scrollbar -->
<div style="position:absolute;left:1899px;top:223px;width:21px;height:767px;background:#e6e6e6;"></div>
<div style="position:absolute;left:1902px;top:224px;width:15px;height:15px;background:#fff;border:1px solid #d0d0d0;"></div>
<svg style="left:1905px;top:229px" width="9" height="5"><polygon points="0,4.5 4.5,0 9,4.5" fill="#777"/></svg>
<div style="position:absolute;left:1902px;top:241px;width:15px;height:709px;background:#dadada;"></div>
<div style="position:absolute;left:1902px;top:952px;width:15px;height:38px;background:#fff;border:1px solid #c6c6c6;"></div>
<svg style="left:1910px;top:981px" width="6" height="5"><polygon points="0,0 6,0 3,4" fill="#777"/></svg>
<!-- sheet tab bar -->
<div style="position:absolute;left:0;top:990px;width:1920px;height:28px;background:#e6e6e6;border-top:1px solid #c6c6c6;"></div>
<svg style="left:27px;top:1000px" width="5" height="8"><polygon points="4.5,0 0,4 4.5,8" fill="#c0c0c0"/></svg>
<svg style="left:56px;top:1000px" width="5" height="8"><polygon points="0,0 4.5,4 0,8" fill="#c0c0c0"/></svg>
<div style="position:absolute;left:100px;top:990px;width:92px;height:25px;background:#fff;border-left:1px solid #c6c6c6;border-right:1px solid #c6c6c6;"></div>
<div style="position:absolute;left:100px;top:1012px;width:92px;height:2px;background:#1e5c38;"></div>
<div style="position:absolute;left:112px;top:995px;font-size:12.6px;font-weight:bold;color:#1e6b3e;white-space:pre;line-height:16px;">Rekap Aset</div>
<svg style="left:224px;top:995px" width="18" height="18"><circle cx="9" cy="9" r="7.5" fill="none" stroke="#777" stroke-width="1.2"/><path d="M9 5 V13 M5 9 H13" stroke="#666" stroke-width="1.5"/></svg>
<div style="position:absolute;left:1152px;top:998px;width:2px;height:2px;background:#9b9b9b;"></div>
<div style="position:absolute;left:1152px;top:1002px;width:2px;height:2px;background:#9b9b9b;"></div>
<div style="position:absolute;left:1152px;top:1006px;width:2px;height:2px;background:#9b9b9b;"></div>
<div style="position:absolute;left:1169px;top:997px;width:400px;height:15px;background:#fff;border:1px solid #c6c6c6;"></div>
<div style="position:absolute;left:1182px;top:998px;width:1px;height:13px;background:#c6c6c6;"></div>
<svg style="left:1173px;top:1000px" width="5" height="8"><polygon points="4.5,0 0,4 4.5,8" fill="#555"/></svg>
<div style="position:absolute;left:1899px;top:990px;width:21px;height:28px;background:#e6e6e6;"></div>
<!-- status bar -->
<div style="position:absolute;left:0;top:1018px;width:1920px;height:22px;background:#f3f3f3;border-top:1px solid #cfcfcf;"></div>
<div style="position:absolute;left:8px;top:1021px;font-size:11.5px;line-height:14px;color:#262626;"><span style="display:inline-block;transform:scaleX(0.88);transform-origin:left">Ready</span></div>
<div style="position:absolute;left:1910px;top:1018px;width:10px;height:22px;background:#c8c8c8;"></div>

<!-- ===== Google Drive panel ===== -->
<div style="position:absolute;left:1560px;top:469px;width:350px;height:431px;background:#1a73e8;"></div>
<div style="position:absolute;left:1560px;top:900px;width:350px;height:140px;background:#fff;"></div>
<div style="position:absolute;left:1585px;top:483px;width:320px;font-size:12.6px;line-height:18px;font-weight:normal;-webkit-text-stroke:0.3px #fff;color:#fff;white-space:pre;">Tip: You can press Ctrl+Shift+Alt+G to focus the
status pane.</div>
<svg style="left:1586px;top:550px" width="37" height="31" viewBox="0 0 87.3 78">
 <path d="m6.6 66.85 3.85 6.65c.8 1.4 1.95 2.5 3.3 3.3l13.75-23.8h-27.5c0 1.55.4 3.1 1.2 4.5z" fill="#0066da"/>
 <path d="m43.65 25-13.75-23.8c-1.35.8-2.5 1.9-3.3 3.3l-25.4 44a9.06 9.06 0 0 0 -1.2 4.5h27.5z" fill="#00ac47"/>
 <path d="m73.55 76.8c1.35-.8 2.5-1.9 3.3-3.3l1.6-2.75 7.65-13.25c.8-1.4 1.2-2.95 1.2-4.5h-27.502l5.852 11.5z" fill="#ea4335"/>
 <path d="m43.65 25 13.75-23.8c-1.35-.8-2.9-1.2-4.5-1.2h-18.5c-1.6 0-3.15.45-4.5 1.2z" fill="#00832d"/>
 <path d="m59.8 53h-32.3l-13.75 23.8c1.35.8 2.9 1.2 4.5 1.2h50.8c1.6 0 3.15-.45 4.5-1.2z" fill="#2684fc"/>
 <path d="m73.4 26.5-12.7-22c-.8-1.4-1.95-2.5-3.3-3.3l-13.75 23.8 16.15 28h27.45c0-1.55-.4-3.1-1.2-4.5z" fill="#ffba00"/>
</svg>
<div style="position:absolute;left:1635px;top:552px;font-size:23.5px;line-height:28px;color:#fff;white-space:pre;">Google Drive</div>
<svg style="left:1854px;top:560px" width="16" height="15"><path d="M1 0.8 L15 14.2 M15 0.8 L1 14.2" stroke="#fff" stroke-width="2"/></svg>
<div style="position:absolute;left:1658px;top:608px;width:154px;height:51px;background:#fff;box-shadow:0 1px 2px rgba(0,0,0,0.25);"></div>
<div style="position:absolute;left:1658px;top:655px;width:154px;height:4px;background:#dde7f4;"></div>
<div style="position:absolute;left:1658px;top:655px;width:65px;height:4px;background:#3b7de0;"></div>
<svg style="left:1671px;top:619px" width="24" height="22" viewBox="0 0 87.3 78">
 <path d="m6.6 66.85 3.850 6.65c.8 1.4 1.95 2.5 3.3 3.3l13.75-23.8h-27.5c0 1.55.4 3.1 1.2 4.5z" fill="#0066da"/>
 <path d="m43.65 25-13.75-23.8c-1.35.8-2.5 1.9-3.3 3.3l-25.4 44a9.06 9.06 0 0 0 -1.2 4.5h27.5z" fill="#00ac47"/>
 <path d="m73.55 76.8c1.35-.8 2.5-1.9 3.3-3.3l1.6-2.75 7.65-13.25c.8-1.4 1.2-2.95 1.2-4.5h-27.502l5.852 11.5z" fill="#ea4335"/>
 <path d="m43.65 25 13.75-23.8c-1.35-.8-2.9-1.2-4.5-1.2h-18.5c-1.6 0-3.15.45-4.5 1.2z" fill="#00832d"/>
 <path d="m59.8 53h-32.3l-13.75 23.8c1.35.8 2.9 1.2 4.5 1.2h50.8c1.6 0 3.15-.45 4.5-1.2z" fill="#2684fc"/>
 <path d="m73.4 26.5-12.7-22c-.8-1.4-1.95-2.5-3.3-3.3l-13.75 23.8 16.15 28h27.45c0-1.55-.4-3.1-1.2-4.5z" fill="#ffba00"/>
</svg>
<div style="position:absolute;left:1705px;top:620px;font-size:16px;line-height:19px;color:#5f6368;white-space:pre;">Google Drive</div>
<div style="position:absolute;left:1585px;top:683px;font-size:21.4px;line-height:28px;color:#fff;white-space:pre;">See who’s editing Microsoft
Office files in Google Drive</div>
<div style="position:absolute;left:1585px;top:760px;font-size:12.7px;line-height:17.6px;color:#fff;white-space:pre;">Now you can see if others are editing Microsoft Word,
PowerPoint, or Excel files, and they can see you. Get
alerts when it’s safe to edit, when you should wait,
and when there’s a new version available.</div>
<div style="position:absolute;left:1585px;top:843px;font-size:12.7px;line-height:17.4px;color:#fff;white-space:pre;">You can disable this anytime from <u>Google Drive</u>
<u>settings.</u></div>
<div style="position:absolute;left:1630px;top:916px;width:40px;height:40px;border-radius:50%;background:#8e58c0;color:#fff;font-size:22px;line-height:40px;text-align:center;">A</div>
<div style="position:absolute;left:1685px;top:916px;font-size:14px;line-height:17px;color:#333;white-space:pre;">Anwar Pajak</div>
<div style="position:absolute;left:1685px;top:937px;font-size:14px;line-height:17px;color:#3c4043;white-space:pre;">anwar.pajak@gmail.com</div>
<div style="position:absolute;left:1585px;top:967px;width:300px;height:36px;border-radius:4px;background:#1a73e8;color:#fff;font-size:12px;font-weight:bold;line-height:36px;text-align:center;">Continue as Anwar Pajak</div>

<!-- ===== Taskbar ===== -->
<div style="position:absolute;left:0;top:1040px;width:1920px;height:40px;background:#eeeeee;"></div>
<svg style="left:16px;top:1052px" width="17" height="17"><path d="M0 2.2 L7.2 1.2 V7.7 H0 Z M8.2 1.05 L16 0 V7.7 H8.2 Z M0 8.7 H7.2 V15.2 L0 14.2 Z M8.2 8.7 H16 V16 L8.2 14.9 Z" fill="#111"/></svg>
<div style="position:absolute;left:48px;top:1040px;width:288px;height:40px;background:#fff;border:1px solid #cfcfcf;border-bottom:none;"></div>
<svg style="left:60px;top:1052px" width="17" height="17"><circle cx="10.5" cy="6" r="5" fill="none" stroke="#222" stroke-width="1.1"/><path d="M7 9.5 L0.8 15.7" stroke="#222" stroke-width="1.2"/></svg>
<div style="position:absolute;left:88px;top:1051px;font-size:14.5px;line-height:18px;color:#333;white-space:pre;">Type here to search</div>
<svg style="left:255px;top:1041px" width="81" height="39">
 <defs><linearGradient id="sand" x1="0" y1="0" x2="0" y2="1"><stop offset="0" stop-color="#f0dcb8"/><stop offset="1" stop-color="#d2ac78"/></linearGradient></defs>
 <path d="M6 39 C14 33 40 31 60 31 C70 31 77 32 81 33 V39 Z" fill="url(#sand)"/>
 <path d="M13 15 C12 12 15 8 17 5 L17 2 L20 1 L23 3 C28 5 33 8 37 10 C44 11 52 11 58 12 C60 14 59 20 57 23 L57 36 L55 36 L54 26 L53 36 L51 36 L50 25 C45 26 40 26 36 25 L35 36 L33 36 L32 27 L31 36 L29 36 L29 24 C26 20 22 17 17 16 C15 17 13 17 13 15 Z" fill="#e4e2ec" stroke="#9a97ad" stroke-width="0.9"/>
 <path d="M18 4 L22 8 M22 5 L25 11 M26 6 L28 13 M30 8 L31 16 M34 9 L34 19 M38 11 L38 24 M42 11 L42 25 M46 11 L46 25 M50 12 L49 24 M54 12 L53 22 M57 13 L55 20" stroke="#3a3850" stroke-width="1.6"/>
 <path d="M20 2 L36 10" stroke="#2f2d45" stroke-width="2.2"/>
 <path d="M58 13 C61 17 62 22 65 29" stroke="#3a3850" stroke-width="2" fill="none"/>
 <path d="M12.5 13.5 L15.5 16.5" stroke="#222" stroke-width="2.5"/>
 <path d="M30 28 L30 36 M34 28 L34 36 M52 27 L52 36 M56 25 L56 36" stroke="#8d8aa0" stroke-width="0.8"/>
</svg>
<!-- icons -->
<svg style="left:351px;top:1048px" width="25" height="25" viewBox="0 0 25 25">
 <defs><linearGradient id="eg" x1="0.1" y1="0.9" x2="0.9" y2="0.1"><stop offset="0" stop-color="#0b4fa0"/><stop offset="0.5" stop-color="#1a8fdc"/><stop offset="1" stop-color="#5ed860"/></linearGradient></defs>
 <path d="M12 0.5 C18.5 0.5 24 5 24 11.5 C24 15 21.5 17.5 18 17.5 C15.5 17.5 13.5 16.5 13.5 14.5 C16.5 15 18 13 18 11 C18 7.5 15 5.5 12 5.5 C7.5 5.5 5 9 5 13 C5 18.5 10 22 15 22 C17.5 22 19.5 21 20.5 20 C18.5 22.5 15.5 24 12 24 C5.5 24 0.5 19 0.5 12.5 C0.5 5.5 5.5 0.5 12 0.5 Z" fill="url(#eg)"/>
 <path d="M5 13 C5 9 7.5 5.5 12 5.5 C15 5.5 18 7.5 18 11 C18 13 16.5 15 13.5 14.5 C13.5 12.5 12.5 11 11 11 C9 11 8 13 8.5 15.5 C9 19 12 21.5 15 22 C10 22 5 18.5 5 13 Z" fill="#1670c8"/>
</svg>
<svg style="left:399px;top:1048px" width="28" height="28" viewBox="0 0 28 28">
 <circle cx="12" cy="12" r="11" fill="#db4437"/>
 <path d="M12 12 L22.5 8.5 A11 11 0 0 1 6.5 21.5 Z" fill="#f4c20d"/>
 <path d="M12 12 L6.5 21.5 A11 11 0 0 1 1.5 8.5 Z" fill="#0f9d58"/>
 <circle cx="12" cy="12" r="5" fill="#fff"/><circle cx="12" cy="12" r="4" fill="#4285f4"/>
 <circle cx="20" cy="20" r="7" fill="#7b56c8"/>
 <text x="16.5" y="24" font-size="9" fill="#fff" font-family="Liberation Sans">A</text>
</svg>
<svg style="left:448px;top:1048px" width="25" height="24" viewBox="0 0 25 24">
 <circle cx="12.5" cy="12" r="11" fill="#ff7139"/>
 <path d="M12.5 1 C19 1 23.5 6 23.5 12 C23.5 9 21 6 18 5 C20 8 20 10 19 12 C18 9 15 7 12 7.5 Z" fill="#ffbd2e"/>
 <circle cx="12.5" cy="13" r="5.5" fill="#9059ff"/>
 <circle cx="12.5" cy="13" r="3" fill="#ff4f5e"/>
</svg>
<svg style="left:497px;top:1050px" width="24" height="20">
 <rect x="0" y="1" width="9" height="3" fill="#e0a800"/>
 <rect x="0" y="3" width="24" height="17" fill="#ffd65c"/>
 <rect x="0" y="6" width="24" height="14" fill="#ffe28a"/>
 <rect x="6" y="10" width="12" height="4" fill="#0f78d4"/>
 <rect x="8" y="13" width="3" height="5" fill="#0f78d4"/><rect x="13" y="13" width="3" height="5" fill="#0f78d4"/>
</svg>
<div style="position:absolute;left:535px;top:1040px;width:46px;height:40px;background:#f7f7f7;"></div>
<svg style="left:546px;top:1049px" width="24" height="22">
 <rect x="6" y="0" width="18" height="22" rx="1.5" fill="#21a366"/>
 <rect x="6" y="11" width="18" height="11" fill="#107c41"/>
 <rect x="15" y="0" width="9" height="11" fill="#33c481"/>
 <rect x="0" y="4" width="13" height="14" rx="1" fill="#107c41"/>
 <path d="M3 7 L10 15 M10 7 L3 15" stroke="#fff" stroke-width="1.8"/>
</svg>
<svg style="left:595px;top:1050px" width="24" height="20">
 <rect x="0" y="0" width="24" height="20" fill="#111"/>
 <rect x="0" y="0" width="24" height="3" fill="#555"/>
 <path d="M3 7 H6 M8 7 H10 M11 11 H20" stroke="#ccc" stroke-width="1"/>
</svg>
<svg style="left:644px;top:1048px" width="24" height="24">
 <rect x="0" y="0" width="24" height="24" rx="4" fill="#c0110e"/>
 <path d="M5 19 C8 14 12 6 11.5 4 C11 2.5 9.5 3.5 10 6 C11 11 15 16 19 17 C20.5 17.5 20.5 15.5 18 15.5 C14 15.5 8 17 5 19 Z" fill="none" stroke="#fff" stroke-width="1.5"/>
</svg>
<svg style="left:692px;top:1048px" width="26" height="24">
 <rect x="7" y="0" width="19" height="24" rx="1.5" fill="#41a5ee"/>
 <rect x="7" y="8" width="19" height="8" fill="#2b7cd3"/>
 <rect x="7" y="16" width="19" height="8" fill="#185abd"/>
 <rect x="0" y="5" width="14" height="14" rx="1" fill="#185abd"/>
 <path d="M2 8 L4 16 L7 10 L10 16 L12 8" stroke="#fff" stroke-width="1.5" fill="none"/>
</svg>
<svg style="left:742px;top:1048px" width="24" height="24">
 <ellipse cx="11" cy="9" rx="10" ry="6" fill="none" stroke="#e06060" stroke-width="1.2"/>
 <path d="M11 4 L16 17 M17 6 L12 17" stroke="#2a7fd4" stroke-width="1.3"/>
 <circle cx="11" cy="20" r="2.5" fill="none" stroke="#2a7fd4" stroke-width="1.2"/>
 <circle cx="17" cy="20" r="2.5" fill="none" stroke="#2a7fd4" stroke-width="1.2"/>
</svg>
<svg style="left:790px;top:1049px" width="26" height="22" viewBox="0 0 87.3 78">
 <path d="m6.6 66.85 3.85 6.65c.8 1.4 1.95 2.5 3.3 3.3l13.75-23.8h-27.5c0 1.55.4 3.1 1.2 4.5z" fill="#0066da"/>
 <path d="m43.65 25-13.75-23.8c-1.35.8-2.5 1.9-3.3 3.3l-25.4 44a9.06 9.06 0 0 0 -1.2 4.5h27.5z" fill="#00ac47"/>
 <path d="m73.55 76.8c1.35-.8 2.5-1.9 3.3-3.3l1.6-2.750 7.65-13.25c.8-1.4 1.2-2.95 1.2-4.5h-27.502l5.852 11.5z" fill="#ea4335"/>
 <path d="m43.65 25 13.75-23.8c-1.35-.8-2.9-1.2-4.5-1.2h-18.5c-1.6 0-3.15.45-4.5 1.2z" fill="#00832d"/>
 <path d="m59.8 53h-32.3l-13.75 23.8c1.35.8 2.9 1.2 4.5 1.2h50.8c1.6 0 3.15-.45 4.5-1.2z" fill="#2684fc"/>
 <path d="m73.4 26.5-12.7-22c-.8-1.4-1.95-2.5-3.3-3.3l-13.75 23.8 16.15 28h27.45c0-1.55-.4-3.1-1.2-4.5z" fill="#ffba00"/>
</svg>
<!-- underlines -->
<div style="position:absolute;left:392px;top:1078px;width:40px;height:2px;background:#0f6cbd;"></div>
<div style="position:absolute;left:441px;top:1078px;width:40px;height:2px;background:#0f6cbd;"></div>
<div style="position:absolute;left:490px;top:1078px;width:40px;height:2px;background:#0f6cbd;"></div>
<div style="position:absolute;left:535px;top:1078px;width:46px;height:2px;background:#0f6cbd;"></div>
<div style="position:absolute;left:588px;top:1078px;width:40px;height:2px;background:#0f6cbd;"></div>
<div style="position:absolute;left:637px;top:1078px;width:40px;height:2px;background:#0f6cbd;"></div>
<div style="position:absolute;left:686px;top:1078px;width:40px;height:2px;background:#0f6cbd;"></div>
<div style="position:absolute;left:735px;top:1078px;width:40px;height:2px;background:#0f6cbd;"></div>
<div style="position:absolute;left:784px;top:1078px;width:40px;height:2px;background:#0f6cbd;"></div>
<!-- tray -->
<svg style="left:1513px;top:1048px" width="22" height="24">
 <path d="M4 2 C9 3 17 3 19 5 L19 8 C17 6 9 6 4 5 Z M4 8 C9 9 17 9 19 11 L19 14 C17 12 9 12 4 11 Z M4 14 C9 15 17 15 19 17 L19 20 C17 18 9 18 4 17 Z" fill="#f0a818"/>
 <rect x="3" y="1" width="3" height="22" fill="#e09010"/>
</svg>
<div style="position:absolute;left:1544px;top:1051px;font-size:13.6px;line-height:18px;color:#222;white-space:pre;">Prakiraan kualitas ud...</div>
<svg style="left:1706px;top:1054px" width="13" height="8"><path d="M0.8 7 L6.5 1.2 L12.2 7" fill="none" stroke="#222" stroke-width="1.2"/></svg>
<svg style="left:1730px;top:1052px" width="14" height="16"><rect x="1" y="4" width="8" height="8" rx="1" fill="none" stroke="#333" stroke-width="1.2"/><path d="M9 6.5 L13 4.5 V11.5 L9 9.5" fill="none" stroke="#333" stroke-width="1.2"/><path d="M2 1 C4 0 7 0 9 1 M2 15 C4 16 7 16 9 15" stroke="#777" fill="none"/></svg>
<svg style="left:1752px;top:1053px" width="17" height="15"><rect x="4.5" y="0.5" width="12" height="9" fill="none" stroke="#333"/><path d="M10.5 9.5 V12.5 M7 12.5 H14" stroke="#333"/><rect x="0.5" y="2.5" width="4" height="4" fill="#fff" stroke="#333"/></svg>
<svg style="left:1776px;top:1052px" width="16" height="16"><path d="M1 5.5 H4 L8 2 V14 L4 10.5 H1 Z" fill="none" stroke="#333" stroke-width="1.1"/><path d="M10.5 5.5 C11.5 7 11.5 9 10.5 10.5 M12.5 3.5 C14.5 6 14.5 10 12.5 12.5" fill="none" stroke="#555" stroke-width="1"/></svg>
<div style="position:absolute;left:1816px;top:1043px;font-size:12px;line-height:14px;color:#222;white-space:pre;">12:25</div>
<div style="position:absolute;left:1803px;top:1061px;font-size:11.8px;line-height:14px;color:#222;white-space:pre;">31/01/2026</div>
<svg style="left:1879px;top:1052px" width="22" height="22"><path d="M1 1 H17 V12 H8 L4 15 V12 H1 Z" fill="#111"/><path d="M4 4.5 H14 M4 7 H14 M4 9.5 H11" stroke="#fff" stroke-width="1"/><circle cx="15" cy="15" r="6" fill="#d0d0d0" stroke="#888"/><text x="12.3" y="18.5" font-size="9" fill="#222" font-family="Liberation Sans">3</text></svg>
<div style="position:absolute;left:1915px;top:1040px;width:1px;height:40px;background:#aaa;"></div>

</body></html>
